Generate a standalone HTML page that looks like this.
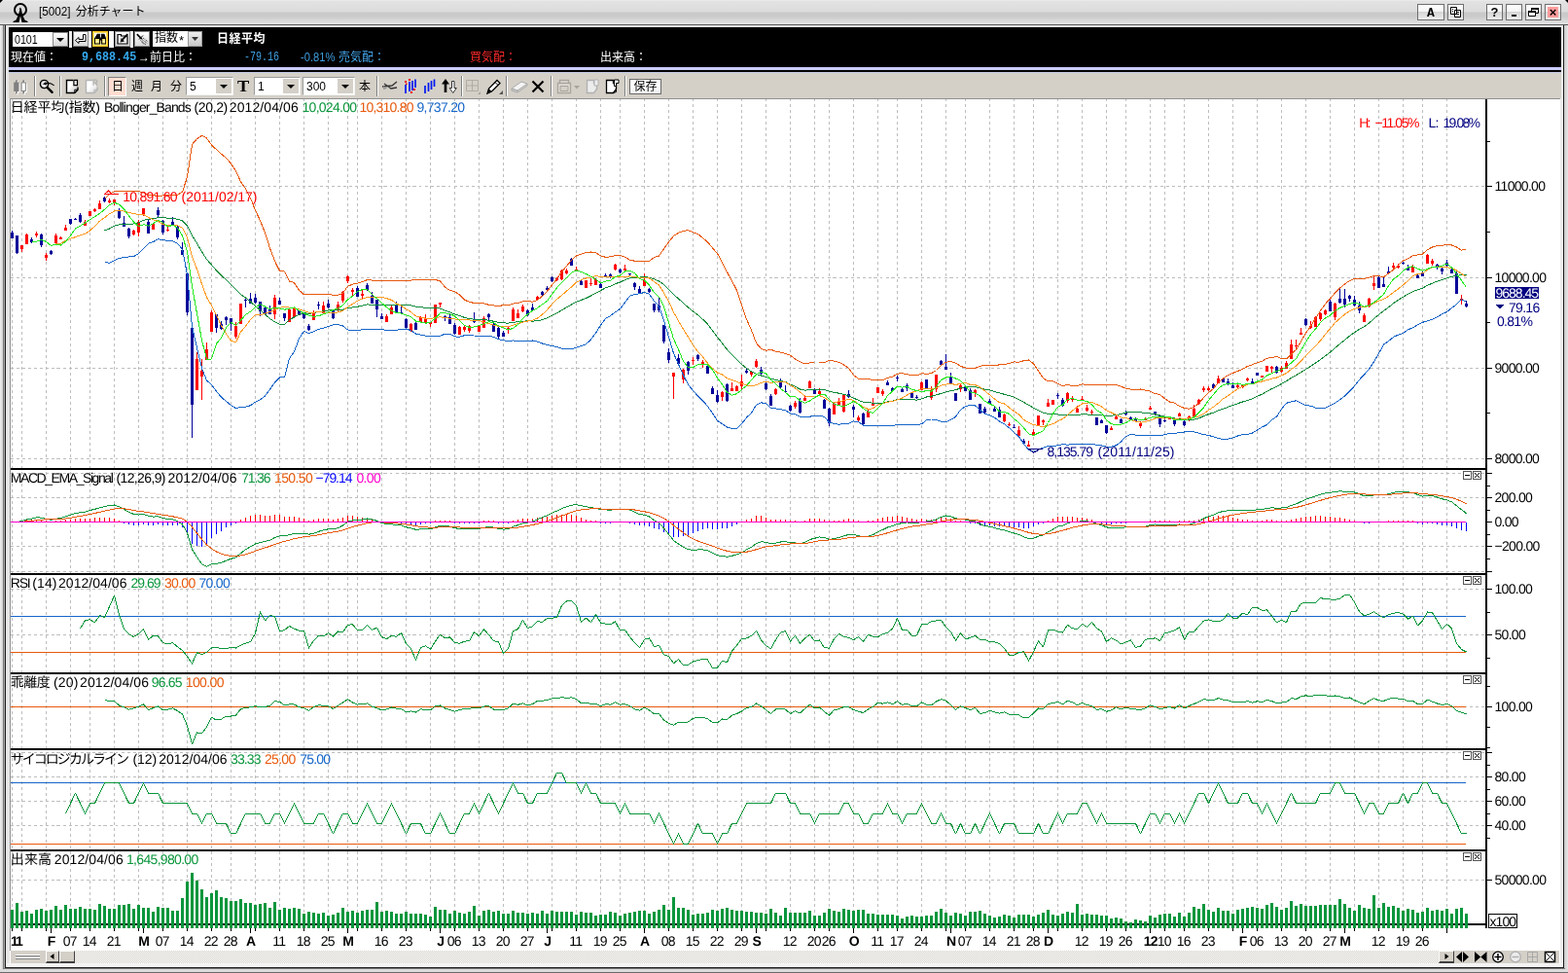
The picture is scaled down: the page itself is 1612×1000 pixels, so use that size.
<!DOCTYPE html>
<html lang="ja">
<head>
<meta charset="utf-8">
<title>[5002] 分析チャート</title>
<style>
*{box-sizing:border-box}
html,body{margin:0;padding:0}
body{width:1612px;height:1000px;overflow:hidden;position:relative;background:#d4d0c8;font-family:"Liberation Sans","Noto Sans CJK JP",sans-serif;font-size:12px;color:#000}
.abs{position:absolute}
#titlebar{left:0;top:0;width:1612px;height:25px;background:linear-gradient(#f0f0f0 0,#e2e2e2 1px,#dcdcdc 12px,#c9c9c9 13px,#cbcbcb 17px,#e0e0e0 24px)}
#titletext{left:39.500px;top:5px;font-size:11px;letter-spacing:0;white-space:pre;line-height:14px}
#titletext span{font-size:12px;letter-spacing:0}
.tbtn{top:4px;height:17px;border:1px solid #6e6e6e;background:linear-gradient(#fff 0,#f4f4f4 45%,#d6d6d6 50%,#ececec 100%);text-align:center;font-weight:bold;font-size:12px;line-height:15px}
#frame{left:0;top:25px;width:1612px;height:975px;background:#e4e4e4}
#blackbar{left:9px;top:28px;width:1596px;height:41px;background:#000}
.mono{font-family:"Liberation Mono",monospace;font-size:11px;letter-spacing:-0.6px;white-space:pre}
.jp{font-size:12px;letter-spacing:0}
.row2{top:52px;line-height:14px;color:#fff}
#toolbar{left:9px;top:75px;width:1596px;height:26px;background:#d4d0c8}
.tsep{top:78px;width:2px;height:21px;border-left:1px solid #808080;border-right:1px solid #fff}
.combo{top:79px;height:19px;background:#fff;border:1px solid #9a9a9a;border-right-color:#f4f4f4;border-bottom-color:#f4f4f4;font-size:12px;line-height:18px;padding-left:3px}
.combo i{position:absolute;right:1px;top:1px;width:16px;height:15px;background:#d4d0c8}
.combo i:after{content:"";position:absolute;left:4px;top:6px;border:4px solid transparent;border-top:4px solid #000;border-bottom:0}
.tt{top:81px;font-size:12px;line-height:16px;height:16px}
.ib{top:32px;width:16px;height:16px;background:linear-gradient(#fff,#d8d8d8);border:1px solid #888}
.wsep{top:32px;width:3px;height:17px;background:#f0f0f0}
</style>
</head>
<body>
<div id="root" style="position:absolute;left:0;top:0;width:1612px;height:1000px;will-change:transform">
<div id="titlebar" class="abs"></div>
<svg class="abs" style="left:0;top:0" width="1612" height="4"><path d="M0 0h3L0 3zM1612 0h-3l3 3z" fill="#000"/></svg>
<svg class="abs" style="left:13px;top:2px" width="16" height="22" viewBox="0 0 16 22"><circle cx="8" cy="8" r="6" fill="none" stroke="#000" stroke-width="2"/><path d="M8 5.5l-1.500 2h1L6 13l-2.500 5.500l-3 1.500v1h6l1.500-7l1.500 7h6v-1l-3-1.500L10 13l-1-5.500z" fill="#000"/></svg>
<div id="titletext" class="abs"><span style="display:inline-block;font-size:13px;transform:scaleX(.9);transform-origin:left;letter-spacing:0">[5002]</span><span style="margin-left:2px">分析チャート</span></div>
<div class="abs tbtn" style="left:1457px;width:28px;font-family:'Liberation Mono',monospace;line-height:17px;font-size:13px">A</div>
<div class="abs tbtn" style="left:1488px;width:17px"><svg width="11" height="11" viewBox="0 0 11 11" style="margin-top:2px"><path d="M.5.5h6v7h-6zM4.500 3.500h6v7h-6z" fill="#fff" stroke="#000"/><path d="M2 2.500h1M2 4.500h1M6 5.500h3M6 7.500h3" stroke="#000"/></svg></div>
<div class="abs tbtn" style="left:1528px;width:17px;font-size:13px">?</div>
<div class="abs tbtn" style="left:1548px;width:17px"><svg width="9" height="13"><path d="M2 10h5v2H2z" fill="#000"/></svg></div>
<div class="abs tbtn" style="left:1568px;width:17px"><svg width="11" height="11" viewBox="0 0 11 11" style="margin-top:2px"><path d="M3.500 1.500h7v5h-7z" fill="none" stroke="#000"/><path d="M3 1h8v2H3z" fill="#000"/><path d="M.5 4.500h7v5h-7z" fill="#fff" stroke="#000"/><path d="M0 4h8v2H0z" fill="#000"/></svg></div>
<div class="abs tbtn" style="left:1588px;width:17px"><div style="margin:2px;height:11px;background:#ff9c9c;line-height:11px;font-size:13px">×</div></div>

<div id="frame" class="abs"></div>
<div class="abs" style="left:0;top:25px;width:1612px;height:1px;background:#5a5a5a"></div>
<div class="abs" style="left:3px;top:26px;width:1px;height:970px;background:#7a7a7a"></div>
<div class="abs" style="left:4px;top:26px;width:1px;height:969px;background:#a8a8a8"></div>
<div class="abs" style="left:5px;top:26px;width:1px;height:969px;background:#1c1c1c"></div>
<div class="abs" style="left:6px;top:26px;width:4px;height:968px;background:#e6e6e6"></div>
<div class="abs" style="left:1604px;top:26px;width:3px;height:968px;background:#ececec"></div>
<div class="abs" style="left:1607px;top:26px;width:1px;height:969px;background:#1c1c1c"></div>
<div class="abs" style="left:1608px;top:26px;width:4px;height:974px;background:linear-gradient(90deg,#c8c8c8,#e8e8e8)"></div>
<div class="abs" style="left:0;top:26px;width:3px;height:974px;background:linear-gradient(90deg,#f0f0f0,#d0d0d0)"></div>

<div id="blackbar" class="abs"></div>
<div class="abs" style="left:9px;top:69px;width:1596px;height:3px;background:#ccccff"></div>
<div class="abs" style="left:9px;top:72px;width:1596px;height:2px;background:#000"></div>
<div class="abs" style="left:9px;top:74px;width:1596px;height:1px;background:#c4cce8"></div>

<!-- row 1 of black bar -->
<div class="abs" style="left:13px;top:33px;width:41px;height:15px;background:#fff;line-height:15px;padding-left:2px;font-size:13px;letter-spacing:0"><span style="display:inline-block;transform:scaleX(.82);transform-origin:left">0101</span></div>
<div class="abs ib" style="left:54px;top:33px;height:15px"><svg width="14" height="13"><path d="M3 5h8l-4 4z" fill="#000"/></svg></div>
<div class="abs wsep" style="left:71px"></div>
<div class="abs ib" style="left:75px"><svg width="14" height="14" viewBox="0 0 14 14"><path d="M9.500 2.500h2.500v7H5v2l-3.500-3L5 5.500v2h4.500z" fill="#fff" stroke="#000"/></svg></div>
<div class="abs wsep" style="left:91px"></div>
<div class="abs ib" style="left:95px;border-color:#ffc820;background:linear-gradient(#fff 50%,#fff0a8 50%);outline:1px solid #ffdc60;outline-offset:-2px"><svg width="14" height="14" viewBox="0 0 14 14"><path d="M4.200 2.200H6.600V12H1.400V7zM8.600 2.200H11L12.700 7v5H8.600z" fill="#ffe470" stroke="#000" stroke-width="1.100"/><path d="M4.200 2.200H6.600V7H2zM8.600 2.200H11L12.400 7H8.600zM6.600 5.500h2v3h-2z" fill="#000"/><path d="M3 8.500h2.200v2H3zM9.800 8.500H12v2H9.800z" fill="#fff6c0"/></svg></div>
<div class="abs wsep" style="left:112px;width:5px;background:#fff"></div>
<div class="abs ib" style="left:118px"><svg width="14" height="14" viewBox="0 0 14 14"><path d="M2 4V2.500H5.500V4H12V12H2z" fill="#f4f4f4" stroke="#000" stroke-width="1.200"/><path d="M12.300 2.200L7 7.500" stroke="#000" stroke-width="1.800"/><path d="M4.600 10.400L5.600 6 9 9.400z" fill="#000"/></svg></div>
<div class="abs wsep" style="left:134px"></div>
<div class="abs ib" style="left:138px"><svg width="14" height="14" viewBox="0 0 14 14"><path d="M1.800 2.200L6.800 7.200" stroke="#000" stroke-width="1.700"/><path d="M4 7.500l4-4" stroke="#000" stroke-width="1"/><path d="M5.500 8.500L11 12.800M7 7.500L12.300 11.500M8 6L13 9.800M6.500 9.800L9.500 13" stroke="#333" stroke-width=".9" stroke-dasharray="1.200 .7"/></svg></div>
<div class="abs" style="left:157px;top:32px;width:36px;height:16px;background:#fff;font-size:12px;line-height:15px;padding-left:2px;white-space:nowrap"><span style="position:absolute;left:2px;top:0">指数</span><span style="position:absolute;left:27px;top:2px;font-size:13px;line-height:15px">*</span></div>
<div class="abs" style="left:193px;top:32px;width:15px;height:16px;background:linear-gradient(#eee,#c8c8c8);border:1px solid #999"><svg width="13" height="14"><path d="M3 5h7l-3.500 4z" fill="#333"/></svg></div>
<div class="abs" style="left:223px;top:33px;font-weight:bold;font-size:12px;line-height:15px;letter-spacing:0.5px;color:#fff">日経平均</div>

<!-- row 2 -->
<div class="abs row2 jp" style="left:11px">現在値：</div>
<div class="abs row2 mono" style="left:84px;color:#35aaf0;font-weight:bold;font-size:13px;letter-spacing:0;transform:scaleX(.9);transform-origin:left">9,688.45</div>
<div class="abs row2 jp" style="left:142px">→前日比：</div>
<div class="abs row2 mono" style="left:251px;color:#3f9fe0;font-size:13px;letter-spacing:0;transform:scaleX(.77);transform-origin:left">-79.16</div>
<div class="abs row2" style="left:309px;color:#3f9fe0;font-size:13px;letter-spacing:0;transform:scaleX(.86);transform-origin:left">-0.81%</div>
<div class="abs row2 jp" style="left:348px;color:#45a8ee">売気配：</div>
<div class="abs row2 jp" style="left:483px;color:#ff2a2a">買気配：</div>
<div class="abs row2 jp" style="left:617px">出来高：</div>

<!-- toolbar -->
<div id="toolbar" class="abs"></div>
<svg class="abs" style="left:13px;top:80px" width="16" height="18" viewBox="0 0 16 18"><g fill="#fff"><path d="M2.200 5.400h5.300v9.600H2.200zM4 3.200h1.700v14H4zM9.600 5.400h5.300v9.600H9.600zM11.400 3.200h1.700v14h-1.700z"/></g><path d="M1.200 4.400h5.300v9.600H1.200zM3 2.200h1.700v14H3zM10.400 2.200h1.700v14h-1.700z" fill="#808080"/><path d="M9.100 4.900h4.300v8.600H9.100z" fill="#fff" stroke="#808080"/></svg>
<div class="abs tsep" style="left:35px"></div>
<svg class="abs" style="left:40px;top:79px" width="18" height="18" viewBox="0 0 18 18"><defs><radialGradient id="mg"><stop offset="0" stop-color="#fff"/><stop offset="1" stop-color="#d0d0d0"/></radialGradient></defs><circle cx="5.500" cy="7.500" r="4.100" fill="url(#mg)" stroke="#000" stroke-width="1.400"/><path d="M8.600 10.800l5 5" stroke="#000" stroke-width="2.400" stroke-linecap="round"/><path d="M15.600 8.800Q11.500 5.300 6.500 6.900" fill="none" stroke="#000" stroke-width="1.100"/><path d="M3.900 7.400l3.400-2.300.5 3.400z" fill="#000"/></svg>
<div class="abs tsep" style="left:61px"></div>
<svg class="abs" style="left:67px;top:81px" width="15" height="16" viewBox="0 0 15 16"><defs><linearGradient id="dga" x1="0" y1="0" x2="1" y2="1"><stop offset="0.400" stop-color="#fff"/><stop offset="1" stop-color="#b8b8b8"/></linearGradient></defs><path d="M8 1.500H1.500v13h8.300l3.200-3.300V8.500" fill="url(#dga)" stroke="#000" stroke-width="1.400"/><path d="M9.800 14.500v-3.300H13" fill="none" stroke="#000"/><path d="M8.900 1.400h3.600v5.200H8.900z" fill="#e8e8e8" stroke="#000" stroke-width="1.200"/></svg>
<svg class="abs" style="left:87px;top:81px" width="15" height="16" viewBox="0 0 15 16"><defs><linearGradient id="dgb" x1="0" y1="0" x2="1" y2="1"><stop offset="0.400" stop-color="#fff"/><stop offset="1" stop-color="#d8d8d8"/></linearGradient></defs><path d="M8 1.500H1.500v13h8.300l3.200-3.300V8.500" fill="url(#dgb)" stroke="#b4b4b4" stroke-width="1.400"/><path d="M9.800 14.500v-3.300H13" fill="none" stroke="#b4b4b4"/><path d="M9 7V1.200h2.200q1.600 0 1.600 1.500t-1.600 1.500H9m2.200 0L13 7" fill="none" stroke="#b0b0b0" stroke-width="1.200"/></svg>
<div class="abs tsep" style="left:107px"></div>
<div class="abs" style="left:111px;top:79px;width:19px;height:20px;background:#ffdcd0;border:1px solid #fff;border-top-color:#808080;border-left-color:#808080"></div>
<div class="abs tt" style="left:115px">日</div>
<div class="abs tt" style="left:135px">週</div>
<div class="abs tt" style="left:155px">月</div>
<div class="abs tt" style="left:175px">分</div>
<div class="abs combo" style="left:191px;width:49px">5<i></i></div>
<div class="abs" style="left:244px;top:79px;font-family:'Liberation Serif',serif;font-weight:bold;font-size:16px;line-height:19px;transform:scaleX(1.15);transform-origin:left">T</div>
<div class="abs combo" style="left:261px;width:48px">1<i></i></div>
<div class="abs combo" style="left:311px;width:54px">300<i></i></div>
<div class="abs tt" style="left:369px">本</div>
<div class="abs tsep" style="left:387px"></div>
<svg class="abs" style="left:392px;top:80px" width="18" height="18" viewBox="0 0 18 18"><path d="M1 9l10-1l5-4M3 6l7 5l6-1" fill="none" stroke="#333" stroke-width="1.300"/><path d="M2 8l4 3-4 1z" fill="#999"/></svg>
<svg class="abs" style="left:414px;top:80px" width="16" height="18" viewBox="0 0 16 18"><path d="M3 7v9M7 4v10M10 3v10M13 1.500v8.500" stroke="#0018f0" stroke-width="1.700"/><path d="M2 3h2v2H2zM6 1h2v2H6zM11 11h2v2h-2zM8 14h2v2H8zM3 5.500h1.500v1.500H3z" fill="#f00000"/></svg>
<svg class="abs" style="left:434px;top:80px" width="16" height="18" viewBox="0 0 16 18"><path d="M3 8v8M6.500 5v9M9.500 3v9M12.500 1.500v7.500" stroke="#0018f0" stroke-width="1.700"/></svg>
<svg class="abs" style="left:453px;top:80px" width="19" height="18" viewBox="0 0 19 18"><path d="M5 1l4 5.500H6.300v8.500H3.700V6.500H1z" fill="#000"/><path d="M11.500 3.500h2.500v7h2.300L12.750 15.500 9.200 10.500h2.300z" fill="#fff" stroke="#222" stroke-width=".9"/></svg>
<div class="abs tsep" style="left:474px"></div>
<svg class="abs" style="left:478px;top:81px" width="18" height="17" viewBox="0 0 18 17"><path d="M1.500 1.500h12v11h-12zM1.500 7h12M7.500 1.500v11" fill="none" stroke="#b0aca4"/><path d="M13 16h3v-3z" fill="#a8a49c"/></svg>
<svg class="abs" style="left:499px;top:80px" width="19" height="18" viewBox="0 0 19 18"><path d="M2 16l1.500-5L12 2.500l3 3L6.500 14z" fill="#fff" stroke="#000" stroke-width="1.300"/><path d="M2 16l1.500-5l3 3z" fill="#000"/><path d="M10 4.500l3 3" stroke="#000"/><path d="M14 17h4v-4z" fill="#555"/></svg>
<div class="abs tsep" style="left:520px"></div>
<svg class="abs" style="left:525px;top:82px" width="18" height="14" viewBox="0 0 18 14"><path d="M1 9l10-7l6 2l-10 7z" fill="#f4f4f4" stroke="#aaa"/><path d="M1 9v2l6 2v-2z" fill="#ccc" stroke="#aaa"/><path d="M7 13l10-7V4" fill="none" stroke="#aaa"/></svg>
<svg class="abs" style="left:545px;top:81px" width="16" height="16" viewBox="0 0 16 16"><path d="M2.500 2.500l11 11M13.500 2.500l-11 11" stroke="#000" stroke-width="2.200"/></svg>
<div class="abs tsep" style="left:566px"></div>
<svg class="abs" style="left:572px;top:81px" width="25" height="16" viewBox="0 0 25 16"><path d="M3.500 1.500h9v3h-9zM1.500 4.500h13v10h-13z" fill="#e0ddd6" stroke="#a8a49c" stroke-width="1.300"/><path d="M4 7.500h8v5H4z" fill="#d4d0c8" stroke="#a8a49c"/><path d="M18 7h6l-3 3.500z" fill="#a8a49c"/></svg>
<svg class="abs" style="left:602px;top:81px" width="15" height="16" viewBox="0 0 15 16"><path d="M1.500 1.500h7v3h3v6l-3 4h-7z" fill="#ececec" stroke="#b0b0b0" stroke-width="1.300"/><path d="M9 1h4v6H9z" fill="#eee" stroke="#b0b0b0"/></svg>
<svg class="abs" style="left:622px;top:81px" width="16" height="16" viewBox="0 0 16 16"><path d="M1.500 1.500h7v3h3v6l-3 4h-7z" fill="#fff" stroke="#000" stroke-width="1.300"/><path d="M9.500 1h4.500v3.500h-2.500v3h-2z" fill="#fff" stroke="#000"/><path d="M8.500 14.500l3-1v-3" fill="none" stroke="#000"/></svg>
<div class="abs tsep" style="left:642px"></div>
<div class="abs" style="left:647px;top:81px;width:33px;height:16px;background:linear-gradient(#fff 50%,#ececec);border:1px solid #6a6a6a;font-size:12px;line-height:14px;text-align:center;letter-spacing:0"><span>保存</span></div>

<svg width="1612" height="1000" viewBox="0 0 1612 1000" style="position:absolute;left:0;top:0;will-change:transform" font-family="Liberation Sans, Noto Sans CJK JP, sans-serif" shape-rendering="crispEdges" text-rendering="geometricPrecision">
<rect x="10" y="101" width="1594" height="892" fill="#fff" />
<path d="M12.500 101V950M22.500 101V950M47.500 101V950M72.500 101V950M92.500 101V950M117.500 101V950M142.500 101V950M167.500 101V950M192.500 101V950M217.500 101V950M237.500 101V950M262.500 101V950M287.500 101V950M312.500 101V950M337.500 101V950M357.500 101V950M367.500 101V950M392.500 101V950M417.500 101V950M442.500 101V950M467.500 101V950M492.500 101V950M517.500 101V950M542.500 101V950M567.500 101V950M592.500 101V950M617.500 101V950M637.500 101V950M662.500 101V950M687.500 101V950M712.500 101V950M737.500 101V950M762.500 101V950M787.500 101V950M812.500 101V950M837.500 101V950M852.500 101V950M877.500 101V950M902.500 101V950M922.500 101V950M947.500 101V950M972.500 101V950M992.500 101V950M1017.500 101V950M1042.500 101V950M1062.500 101V950M1087.500 101V950M1112.500 101V950M1137.500 101V950M1157.500 101V950M1182.500 101V950M1197.500 101V950M1217.500 101V950M1242.500 101V950M1267.500 101V950M1292.500 101V950M1317.500 101V950M1342.500 101V950M1367.500 101V950M1392.500 101V950M1417.500 101V950M1442.500 101V950M1462.500 101V950M1487.500 101V950" stroke="#bdbdbd" stroke-width="1" stroke-dasharray="3 3" fill="none"/>
<path d="M10.500 191.500H1527M10.500 285.500H1527M10.500 378.500H1527M10.500 471.500H1527M10.500 486.500H1527M10.500 511.500H1527M10.500 561.500H1527M10.500 587.500H1527M10.500 773.500H1527M10.500 605.500H1527M10.500 652.500H1527M10.500 726.500H1527M10.500 798.500H1527M10.500 823.500H1527M10.500 848.500H1527M10.500 904.500H1527" stroke="#bdbdbd" stroke-width="1" stroke-dasharray="3 3" fill="none"/>
<path d="M22.500 252.000V259.000M27.500 240.000V251.000M37.500 238.000V244.400M47.500 260.000V267.600M57.500 240.000V251.000M62.500 243.000V246.000M67.500 231.000V237.000M87.500 226.000V232.000M92.500 217.000V222.000M97.500 214.000V218.000M102.500 206.000V215.000M112.500 204.400V209.000M117.500 205.000V211.000M137.500 235.600V242.000M142.500 226.000V242.600M147.500 213.600V222.000M157.500 229.000V236.000M172.500 233.000V237.600M202.500 362.000V400.600M207.500 369.000V411.000M212.500 352.000V370.000M217.500 319.000V340.600M242.500 331.000V348.000M247.500 312.000V332.600M282.500 303.000V328.000M297.500 318.000V330.600M302.500 315.600V325.600M322.500 319.000V329.000M332.500 310.400V323.000M347.500 310.000V320.000M352.500 299.400V311.000M357.500 283.000V291.000M362.500 296.000V304.000M372.500 298.000V307.000M397.500 323.000V331.000M402.500 314.000V323.000M422.500 332.000V340.600M432.500 325.000V331.400M437.500 323.000V332.000M442.500 331.000V336.000M447.500 313.000V332.000M452.500 311.000V316.000M472.500 335.000V344.000M477.500 334.600V340.600M482.500 334.000V342.000M492.500 335.000V341.000M497.500 325.000V337.000M522.500 335.600V342.600M527.500 316.000V330.000M532.500 317.600V327.000M537.500 313.000V320.600M552.500 304.000V308.000M572.500 285.000V289.000M577.500 277.000V288.000M582.500 276.000V282.000M592.500 273.600V278.000M602.500 288.000V295.600M607.500 286.000V294.400M612.500 286.000V293.000M632.500 271.000V278.000M642.500 271.600V279.400M662.500 281.000V294.000M692.500 383.000V410.000M702.500 379.000V394.000M712.500 367.000V375.000M722.500 370.000V378.000M742.500 401.600V411.600M752.500 393.000V402.000M757.500 396.000V402.000M762.500 385.000V400.000M772.500 381.200V387.000M777.500 369.000V378.000M797.500 399.000V406.000M817.500 412.000V420.000M827.500 407.000V412.000M832.500 391.000V399.000M842.500 399.000V405.000M857.500 414.000V426.000M862.500 409.000V416.400M867.500 405.000V424.000M882.500 427.000V433.000M892.500 421.000V429.000M897.500 409.000V417.000M902.500 398.000V403.600M907.500 400.000V407.000M947.500 392.000V401.000M957.500 397.000V411.000M962.500 385.000V403.000M987.500 395.000V403.000M1002.500 400.000V408.000M1032.500 425.000V434.000M1037.500 434.000V438.000M1047.500 438.000V448.000M1057.500 453.000V459.000M1062.500 441.000V448.000M1067.500 427.000V438.000M1072.500 431.000V437.000M1077.500 410.000V418.000M1082.500 411.000V416.000M1097.500 403.000V413.600M1102.500 407.000V413.000M1107.500 417.000V424.000M1112.500 407.000V412.000M1117.500 416.000V423.000M1122.500 421.000V426.000M1142.500 438.000V442.000M1147.500 426.000V431.000M1172.500 433.000V440.000M1177.500 429.000V432.000M1182.500 416.600V421.000M1202.500 429.400V430.600M1212.500 424.000V428.000M1222.500 427.000V432.600M1227.500 416.000V428.000M1232.500 409.600V416.000M1237.500 397.000V403.000M1242.500 397.000V402.000M1252.500 386.000V394.000M1272.500 394.000V399.600M1277.500 394.600V399.000M1282.500 388.000V391.600M1297.500 385.600V387.600M1302.500 376.000V381.600M1307.500 376.000V383.000M1317.500 375.600V382.600M1322.500 370.600V379.000M1327.500 349.000V369.000M1332.500 349.000V358.000M1337.500 337.000V343.600M1347.500 330.400V337.600M1352.500 325.000V336.000M1357.500 321.000V329.600M1362.500 318.000V323.600M1372.500 311.000V328.600M1402.500 322.000V331.000M1407.500 306.000V315.600M1412.500 284.000V298.000M1432.500 270.000V277.000M1437.500 270.600V276.000M1452.500 272.000V280.000M1467.500 261.400V271.000M1472.500 266.000V272.600M1502.500 303.000V313.000" stroke="#ff0000" stroke-width="1" fill="none"/>
<path d="M21 252h3v4h-3zM26 240.500h3v10h-3zM36 239.500h3v2h-3zM46 261.500h3v3h-3zM56 242h3v8h-3zM61 244h3v1.500h-3zM66 233.500h3v3h-3zM86 228h3v3.500h-3zM91 217h3v4.500h-3zM96 215h3v2h-3zM101 209h3v5.500h-3zM111 205.500h3v2h-3zM116 205h3v3h-3zM136 236.500h3v4.500h-3zM141 228h3v10.500h-3zM146 214h3v7h-3zM156 230h3v5.500h-3zM171 236h3v1h-3zM201 369h3v31.500h-3zM206 381h3v5.500h-3zM211 359h3v11h-3zM216 320.500h3v20h-3zM241 335h3v11h-3zM246 312h3v20.500h-3zM281 306h3v17h-3zM296 318h3v12.500h-3zM301 315.500h3v10h-3zM321 322h3v6.500h-3zM331 314h3v8h-3zM346 313h3v6h-3zM351 299.500h3v9.500h-3zM356 284h3v5h-3zM361 297.500h3v2.500h-3zM371 301.500h3v2h-3zM396 324.500h3v6h-3zM401 316h3v6.500h-3zM421 332.500h3v7h-3zM431 325.500h3v5.500h-3zM436 328h3v2.500h-3zM441 331h3v2h-3zM446 313h3v18.500h-3zM451 311h3v1.500h-3zM471 336h3v7.500h-3zM476 335.500h3v3.500h-3zM481 335h3v5h-3zM491 335h3v5.500h-3zM496 327h3v9.500h-3zM521 337h3v2h-3zM526 318h3v11.500h-3zM531 321.500h3v5h-3zM536 315h3v4.500h-3zM551 304.500h3v3h-3zM571 285.500h3v2.500h-3zM576 277.500h3v9.500h-3zM581 277.500h3v3.500h-3zM591 277h3v1h-3zM601 288h3v7.500h-3zM606 291h3v1h-3zM611 287h3v5.500h-3zM631 271.500h3v5.500h-3zM641 275.500h3v2h-3zM661 288h3v5.500h-3zM691 383h3v4h-3zM701 380h3v9.500h-3zM711 370h3v1h-3zM721 372h3v1.500h-3zM741 403h3v4.500h-3zM751 399h3v2.500h-3zM756 397h3v4.500h-3zM761 392h3v5h-3zM771 382h3v2.500h-3zM776 371h3v6h-3zM796 400h3v5h-3zM816 414h3v3.500h-3zM826 408.500h3v3h-3zM831 391.500h3v7h-3zM841 401.500h3v3h-3zM856 415h3v10.500h-3zM861 413h3v2.500h-3zM866 405.500h3v17h-3zM881 428.500h3v3h-3zM891 422.500h3v6h-3zM896 414h3v2.500h-3zM901 398h3v5.500h-3zM906 402h3v3h-3zM946 392.500h3v8h-3zM956 400.500h3v8.500h-3zM961 385h3v14.500h-3zM986 396h3v3.500h-3zM1001 401h3v3h-3zM1031 425.500h3v7.500h-3zM1036 435.500h3v1.500h-3zM1046 442h3v5.500h-3zM1056 456.500h3v2.500h-3zM1061 443.500h3v3.500h-3zM1066 427h3v10h-3zM1071 431.500h3v2.500h-3zM1076 414h3v3.500h-3zM1081 411h3v4.500h-3zM1096 403.500h3v8.500h-3zM1101 409h3v2h-3zM1106 420h3v3.500h-3zM1111 409.500h3v1h-3zM1116 419h3v2.500h-3zM1121 422.500h3v1.500h-3zM1141 439.500h3v2h-3zM1146 427.500h3v3h-3zM1171 435h3v3h-3zM1176 429.500h3v2h-3zM1181 418.500h3v2h-3zM1201 429.500h3v1h-3zM1211 424.500h3v3h-3zM1221 428h3v4h-3zM1226 419.500h3v8.500h-3zM1231 411h3v4h-3zM1236 399h3v2h-3zM1241 399h3v2h-3zM1251 389h3v4.500h-3zM1271 396h3v2h-3zM1276 395.500h3v2.500h-3zM1281 389h3v1.500h-3zM1296 386h3v1.500h-3zM1301 376h3v5.500h-3zM1306 377h3v2h-3zM1316 377.500h3v4.500h-3zM1321 373h3v5.500h-3zM1326 354h3v14.500h-3zM1331 355h3v1h-3zM1336 341.500h3v2h-3zM1346 334.500h3v2.500h-3zM1351 325.500h3v10h-3zM1356 322h3v6h-3zM1361 318.500h3v4.500h-3zM1371 311.500h3v14h-3zM1401 324h3v6.500h-3zM1406 306.500h3v8.500h-3zM1411 291h3v2.500h-3zM1431 273h3v2h-3zM1436 272.500h3v2h-3zM1451 273.500h3v6h-3zM1466 261.500h3v9h-3zM1471 268h3v3h-3zM1501 307h3v2h-3z" fill="#ff0000"/>
<path d="M12.500 237.000V245.000M17.500 242.000V261.000M32.500 244.000V249.600M42.500 240.000V253.600M52.500 257.000V261.600M72.500 225.000V231.000M77.500 224.400V225.400M82.500 218.600V229.000M107.500 202.000V207.600M122.500 214.000V225.000M127.500 222.000V233.000M132.500 234.000V245.000M152.500 225.600V240.000M162.500 213.000V223.000M167.500 226.000V241.000M177.500 223.000V232.000M182.500 232.000V246.000M187.500 249.000V262.000M192.500 280.000V324.400M197.500 337.000V450.000M222.500 323.000V342.000M227.500 330.000V339.000M232.500 325.400V334.000M237.500 327.000V340.000M252.500 307.000V316.000M257.500 301.000V312.000M262.500 302.000V312.000M267.500 310.000V325.000M272.500 316.000V324.000M277.500 314.000V323.000M287.500 305.600V313.000M292.500 322.000V330.000M307.500 319.000V323.600M312.500 321.000V328.000M317.500 333.000V340.000M327.500 310.000V318.000M337.500 307.600V317.000M342.500 318.000V328.000M367.500 294.000V305.000M377.500 291.000V299.000M382.500 300.000V312.000M387.500 308.000V326.000M392.500 322.000V328.000M407.500 310.000V321.000M412.500 315.000V322.000M417.500 327.400V337.000M427.500 331.000V339.000M457.500 324.000V330.000M462.500 321.600V333.000M467.500 332.000V343.600M487.500 321.000V332.000M502.500 321.600V329.000M507.500 332.000V341.000M512.500 336.000V348.000M517.500 340.000V346.000M542.500 318.000V325.000M547.500 312.400V319.400M557.500 299.000V304.000M562.500 294.000V299.000M567.500 283.600V290.000M587.500 265.000V273.000M597.500 288.000V293.000M617.500 290.000V296.000M622.500 281.000V285.000M627.500 281.200V285.600M637.500 275.600V280.600M647.500 280.600V284.400M652.500 290.000V297.600M657.500 293.600V301.600M667.500 296.000V301.000M672.500 312.000V321.000M677.500 306.000V321.000M682.500 334.000V353.000M687.500 358.000V373.000M697.500 364.000V375.000M707.500 371.000V385.000M717.500 364.000V371.000M727.500 374.000V384.000M732.500 397.000V405.000M737.500 401.000V414.000M747.500 394.000V412.600M767.500 379.000V384.000M782.500 377.000V386.000M787.500 393.000V401.000M792.500 405.000V417.000M802.500 389.000V399.000M807.500 396.000V403.000M812.500 416.000V422.600M822.500 409.000V425.000M837.500 399.000V405.000M847.500 410.000V420.000M852.500 419.000V438.000M872.500 400.600V409.000M877.500 416.000V429.000M887.500 424.000V437.000M912.500 391.000V396.000M917.500 398.000V402.000M922.500 385.600V391.600M927.500 398.000V403.000M932.500 394.000V402.000M937.500 403.000V409.000M942.500 406.000V410.000M952.500 390.000V400.000M967.500 369.600V376.000M972.500 364.000V380.000M977.500 383.000V394.000M982.500 404.000V412.000M992.500 397.000V402.000M997.500 399.000V411.000M1007.500 415.000V425.000M1012.500 418.000V426.000M1017.500 409.600V415.600M1022.500 418.000V423.000M1027.500 418.000V429.400M1042.500 436.000V440.000M1052.500 451.000V457.000M1087.500 404.000V409.600M1092.500 409.000V418.000M1127.500 429.000V437.000M1132.500 431.000V435.000M1137.500 437.000V446.000M1152.500 430.000V435.000M1157.500 422.000V427.000M1162.500 428.000V432.000M1167.500 429.000V433.000M1187.500 423.000V427.000M1192.500 426.000V439.000M1197.500 429.000V433.600M1207.500 431.000V438.000M1217.500 432.000V438.000M1247.500 394.000V399.000M1257.500 388.000V393.000M1262.500 389.400V395.600M1267.500 393.000V399.000M1287.500 389.000V394.000M1292.500 383.000V385.600M1312.500 376.000V384.000M1342.500 326.600V335.000M1367.500 308.000V320.000M1377.500 297.000V312.000M1382.500 297.000V316.000M1387.500 302.600V310.000M1392.500 304.000V315.000M1397.500 310.000V322.000M1417.500 284.000V296.000M1422.500 285.000V295.000M1427.500 274.000V282.000M1442.500 268.000V272.000M1447.500 272.000V278.000M1457.500 281.000V286.000M1462.500 279.000V284.000M1477.500 271.000V277.000M1482.500 274.000V282.000M1487.500 267.000V274.000M1492.500 276.000V281.000M1497.500 279.000V302.000M1507.500 309.000V316.000" stroke="#000099" stroke-width="1" fill="none"/>
<path d="M11 239h3v5.500h-3zM16 242h3v18h-3zM31 245.500h3v3h-3zM41 241h3v11h-3zM51 258h3v3h-3zM71 225h3v5h-3zM76 224.500h3v1h-3zM81 221h3v7h-3zM106 203h3v4h-3zM121 217h3v7h-3zM126 229h3v3.500h-3zM131 235h3v7.500h-3zM151 228h3v11.500h-3zM161 216h3v5h-3zM166 227h3v11.500h-3zM176 227.500h3v3.500h-3zM181 233h3v11h-3zM186 257h3v4.500h-3zM191 281h3v40h-3zM196 337h3v78.500h-3zM221 323h3v14h-3zM226 333h3v5h-3zM231 325.500h3v3h-3zM236 327h3v6h-3zM251 307.500h3v1.500h-3zM256 307h3v5h-3zM261 305.500h3v5.500h-3zM266 310h3v10h-3zM271 316h3v7h-3zM276 318h3v4.500h-3zM286 309h3v3.500h-3zM291 322h3v5h-3zM306 319h3v4.500h-3zM311 322h3v4.500h-3zM316 334.500h3v4h-3zM326 313h3v1h-3zM336 311.500h3v4.500h-3zM341 319h3v8h-3zM366 296h3v9h-3zM376 293h3v4.500h-3zM381 304h3v7.500h-3zM386 308h3v10h-3zM391 324.500h3v3h-3zM406 313h3v8h-3zM411 321h3v1h-3zM416 327.500h3v9h-3zM426 331.500h3v7h-3zM456 324.500h3v1h-3zM461 325.500h3v7h-3zM466 334h3v8.500h-3zM486 328h3v3h-3zM501 323h3v2.500h-3zM506 333h3v7.500h-3zM511 336.500h3v9.500h-3zM516 341.500h3v4h-3zM541 319h3v4.500h-3zM546 316h3v2.500h-3zM556 299.500h3v3h-3zM561 295.500h3v2.500h-3zM566 285h3v3.500h-3zM586 265.500h3v7h-3zM596 289h3v3.500h-3zM616 291.500h3v4h-3zM621 283h3v1h-3zM626 282h3v1.500h-3zM636 276.500h3v3.500h-3zM646 280.500h3v1h-3zM651 291h3v4h-3zM656 297h3v4h-3zM666 297h3v3h-3zM671 312h3v7h-3zM676 313.500h3v5h-3zM681 334h3v17h-3zM686 361.500h3v8h-3zM696 368h3v6h-3zM706 372h3v9h-3zM716 365h3v3.500h-3zM726 375.500h3v8h-3zM731 398.500h3v6h-3zM736 406h3v7h-3zM746 395h3v16.500h-3zM766 381h3v1.500h-3zM781 380h3v3.500h-3zM786 394h3v5.500h-3zM791 406.500h3v10h-3zM801 392h3v6h-3zM806 401.500h3v1h-3zM811 417h3v5h-3zM821 412h3v12h-3zM836 400h3v4.500h-3zM846 411h3v8.500h-3zM851 420h3v15h-3zM871 404.500h3v3.500h-3zM876 417.500h3v3h-3zM886 425h3v11h-3zM911 392.500h3v3h-3zM916 398.500h3v3h-3zM921 388h3v1h-3zM926 399.500h3v3h-3zM931 396h3v3h-3zM936 403.500h3v5h-3zM941 408h3v1h-3zM951 390h3v10h-3zM966 371h3v3.500h-3zM971 377h3v2.500h-3zM976 388h3v6h-3zM981 404h3v7.500h-3zM991 398h3v3.500h-3zM996 401h3v9.500h-3zM1006 415h3v9.500h-3zM1011 420h3v4h-3zM1016 411.500h3v3h-3zM1021 419.500h3v3h-3zM1026 421h3v8h-3zM1041 438.500h3v1h-3zM1051 452.500h3v3.500h-3zM1086 405.500h3v1.500h-3zM1091 411h3v6h-3zM1126 429h3v7.500h-3zM1131 432h3v2.500h-3zM1136 437h3v8h-3zM1151 431h3v3.500h-3zM1156 423.500h3v2.500h-3zM1161 429h3v1.500h-3zM1166 430.500h3v2h-3zM1186 423h3v2.500h-3zM1191 427h3v8.500h-3zM1196 431.500h3v1h-3zM1206 432h3v4h-3zM1216 433h3v4h-3zM1246 395h3v3.500h-3zM1256 388.500h3v4h-3zM1261 392h3v1.500h-3zM1266 396h3v2.500h-3zM1286 391.500h3v2h-3zM1291 383h3v2.500h-3zM1311 377h3v6h-3zM1341 327.500h3v6.500h-3zM1366 310h3v9.500h-3zM1376 306.500h3v4h-3zM1381 306.500h3v6.500h-3zM1386 304h3v2.500h-3zM1391 307.500h3v6h-3zM1396 313.500h3v5h-3zM1416 284.500h3v11h-3zM1421 292h3v2.500h-3zM1426 279h3v2h-3zM1441 270h3v1h-3zM1446 275h3v2.500h-3zM1456 283h3v2.500h-3zM1461 281h3v2.500h-3zM1476 272h3v2h-3zM1481 276h3v3h-3zM1486 270h3v3h-3zM1491 277h3v3.500h-3zM1496 280.500h3v21h-3zM1506 312h3v3h-3z" fill="#000099"/>
<polyline points="107.500,204.200 112.500,199.700 117.500,196.600 122.500,196.300 127.500,196.100 132.500,196.400 137.500,196.400 142.500,196.700 147.500,197.500 152.500,200.300 157.500,200.800 162.500,201.300 167.500,201.000 172.500,200.900 177.500,201.000 182.500,200.300 187.500,197.300 192.500,181.900 197.500,148.300 202.500,142.700 207.500,139.300 212.500,142.000 217.500,149.000 222.500,153.700 227.500,158.200 232.500,162.400 237.500,168.100 242.500,175.800 247.500,186.800 252.500,193.900 257.500,203.600 262.500,216.200 267.500,226.700 272.500,239.200 277.500,255.200 282.500,268.300 287.500,278.600 292.500,279.100 297.500,289.000 302.500,290.600 307.500,298.300 312.500,302.800 317.500,302.300 322.500,302.700 327.500,302.700 332.500,302.200 337.500,302.400 342.500,303.200 347.500,303.400 352.500,301.200 357.500,294.300 362.500,292.200 367.500,291.100 372.500,289.600 377.500,287.600 382.500,288.100 387.500,288.300 392.500,288.300 397.500,288.200 402.500,288.200 407.500,288.300 412.500,288.400 417.500,288.700 422.500,288.100 427.500,287.200 432.500,287.400 437.500,287.500 442.500,287.400 447.500,287.400 452.500,288.900 457.500,295.200 462.500,298.400 467.500,299.700 472.500,302.900 477.500,308.200 482.500,310.300 487.500,311.500 492.500,311.600 497.500,311.900 502.500,313.300 507.500,314.000 512.500,314.300 517.500,313.800 522.500,313.900 527.500,312.100 532.500,311.600 537.500,309.800 542.500,309.200 547.500,310.300 552.500,308.500 557.500,304.300 562.500,299.300 567.500,292.900 572.500,286.700 577.500,279.500 582.500,273.500 587.500,267.200 592.500,262.900 597.500,261.200 602.500,259.300 607.500,259.000 612.500,259.900 617.500,262.800 622.500,264.300 627.500,263.900 632.500,262.700 637.500,262.600 642.500,264.300 647.500,267.200 652.500,268.200 657.500,268.400 662.500,268.900 667.500,268.200 672.500,264.400 677.500,263.000 682.500,255.700 687.500,248.800 692.500,242.500 697.500,239.300 702.500,237.400 707.500,236.700 712.500,238.700 717.500,240.500 722.500,244.500 727.500,248.800 732.500,254.900 737.500,260.500 742.500,270.000 747.500,279.600 752.500,288.800 757.500,298.300 762.500,313.500 767.500,328.100 772.500,339.300 777.500,352.700 782.500,358.300 787.500,360.300 792.500,359.300 797.500,361.100 802.500,362.200 807.500,363.300 812.500,365.200 817.500,369.000 822.500,371.800 827.500,373.900 832.500,372.900 837.500,373.000 842.500,373.000 847.500,372.500 852.500,370.500 857.500,371.100 862.500,372.300 867.500,375.000 872.500,378.300 877.500,385.400 882.500,389.300 887.500,389.300 892.500,389.300 897.500,390.800 902.500,390.800 907.500,390.800 912.500,388.400 917.500,387.300 922.500,384.200 927.500,383.700 932.500,384.900 937.500,385.300 942.500,386.000 947.500,383.700 952.500,384.300 957.500,383.600 962.500,380.500 967.500,375.500 972.500,372.200 977.500,371.700 982.500,373.100 987.500,376.300 992.500,378.000 997.500,378.400 1002.500,378.500 1007.500,376.300 1012.500,375.300 1017.500,375.200 1022.500,375.800 1027.500,374.800 1032.500,374.700 1037.500,373.400 1042.500,371.900 1047.500,372.300 1052.500,370.700 1057.500,370.000 1062.500,373.800 1067.500,381.200 1072.500,388.600 1077.500,392.000 1082.500,391.900 1087.500,394.100 1092.500,396.600 1097.500,395.300 1102.500,396.900 1107.500,396.500 1112.500,394.900 1117.500,395.400 1122.500,395.400 1127.500,395.400 1132.500,395.700 1137.500,395.400 1142.500,395.400 1147.500,395.400 1152.500,397.100 1157.500,399.300 1162.500,400.100 1167.500,400.100 1172.500,400.000 1177.500,401.100 1182.500,402.100 1187.500,404.600 1192.500,405.500 1197.500,409.700 1202.500,413.000 1207.500,414.100 1212.500,417.500 1217.500,419.400 1222.500,420.200 1227.500,418.400 1232.500,414.600 1237.500,408.700 1242.500,403.700 1247.500,399.400 1252.500,393.300 1257.500,389.000 1262.500,385.500 1267.500,383.400 1272.500,381.400 1277.500,379.400 1282.500,376.500 1287.500,374.700 1292.500,372.800 1297.500,371.300 1302.500,368.300 1307.500,367.300 1312.500,366.600 1317.500,368.400 1322.500,369.000 1327.500,363.900 1332.500,359.400 1337.500,351.000 1342.500,342.300 1347.500,335.300 1352.500,327.100 1357.500,319.400 1362.500,312.300 1367.500,307.000 1372.500,300.900 1377.500,296.000 1382.500,292.000 1387.500,288.500 1392.500,286.500 1397.500,286.200 1402.500,286.300 1407.500,285.100 1412.500,283.400 1417.500,283.600 1422.500,284.900 1427.500,281.100 1432.500,277.100 1437.500,272.500 1442.500,267.900 1447.500,265.800 1452.500,262.800 1457.500,262.000 1462.500,261.000 1467.500,256.700 1472.500,254.000 1477.500,252.600 1482.500,252.300 1487.500,251.200 1492.500,252.000 1497.500,254.000 1502.500,257.200 1507.500,255.800" fill="none" stroke="#e8590c" stroke-width="1" stroke-linejoin="round"/>
<polyline points="107.500,269.700 112.500,270.200 117.500,267.800 122.500,265.400 127.500,264.700 132.500,263.900 137.500,263.600 142.500,260.800 147.500,255.300 152.500,250.300 157.500,248.600 162.500,245.800 167.500,246.600 172.500,247.400 177.500,247.800 182.500,250.100 187.500,256.400 192.500,282.200 197.500,335.900 202.500,357.500 207.500,378.300 212.500,391.000 217.500,395.500 222.500,402.100 227.500,408.200 232.500,412.500 237.500,416.600 242.500,419.600 247.500,418.300 252.500,418.200 257.500,416.700 262.500,413.100 267.500,410.700 272.500,406.900 277.500,400.100 282.500,393.200 287.500,387.900 292.500,388.000 297.500,368.400 302.500,361.400 307.500,348.000 312.500,340.300 317.500,342.600 322.500,340.700 327.500,338.200 332.500,337.300 337.500,335.400 342.500,333.700 347.500,333.700 352.500,334.900 357.500,339.000 362.500,339.800 367.500,339.400 372.500,338.800 377.500,338.200 382.500,338.300 387.500,338.600 392.500,338.700 397.500,339.400 402.500,339.500 407.500,339.200 412.500,338.500 417.500,338.000 422.500,339.700 427.500,343.100 432.500,344.100 437.500,345.200 442.500,345.700 447.500,345.700 452.500,345.300 457.500,343.200 462.500,343.400 467.500,345.900 472.500,346.200 477.500,344.700 482.500,344.900 487.500,345.000 492.500,345.600 497.500,345.600 502.500,345.200 507.500,346.400 512.500,348.500 517.500,349.900 522.500,350.300 527.500,350.000 532.500,350.100 537.500,350.600 542.500,350.500 547.500,350.000 552.500,351.100 557.500,353.000 562.500,354.600 567.500,355.500 572.500,356.700 577.500,358.100 582.500,358.300 587.500,358.800 592.500,357.300 597.500,355.500 602.500,353.700 607.500,349.000 612.500,342.200 617.500,334.300 622.500,327.500 627.500,324.500 632.500,320.800 637.500,317.400 642.500,310.900 647.500,304.200 652.500,302.300 657.500,301.900 662.500,300.400 667.500,302.200 672.500,309.400 677.500,314.900 682.500,329.500 687.500,346.200 692.500,363.100 697.500,374.400 702.500,385.500 707.500,395.200 712.500,401.500 717.500,407.000 722.500,411.800 727.500,417.500 732.500,424.700 737.500,432.400 742.500,435.600 747.500,439.100 752.500,440.300 757.500,440.400 762.500,435.500 767.500,429.200 772.500,424.300 777.500,416.100 782.500,413.800 787.500,414.800 792.500,419.200 797.500,420.000 802.500,420.600 807.500,421.700 812.500,425.000 817.500,425.800 822.500,428.100 827.500,428.500 832.500,428.200 837.500,427.200 842.500,427.100 847.500,428.400 852.500,434.000 857.500,435.300 862.500,436.200 867.500,435.700 872.500,435.100 877.500,432.900 882.500,433.500 887.500,437.100 892.500,437.700 897.500,437.600 902.500,437.600 907.500,437.600 912.500,437.400 917.500,437.200 922.500,436.800 927.500,436.700 932.500,436.200 937.500,436.300 942.500,436.300 947.500,435.900 952.500,431.800 957.500,431.000 962.500,431.400 967.500,433.200 972.500,433.700 977.500,431.500 982.500,428.400 987.500,421.200 992.500,417.400 997.500,416.700 1002.500,416.900 1007.500,421.300 1012.500,425.200 1017.500,426.600 1022.500,429.300 1027.500,433.000 1032.500,435.800 1037.500,439.800 1042.500,444.400 1047.500,448.900 1052.500,456.100 1057.500,462.400 1062.500,464.400 1067.500,462.300 1072.500,460.100 1077.500,458.700 1082.500,458.700 1087.500,457.600 1092.500,456.700 1097.500,457.200 1102.500,456.500 1107.500,456.400 1112.500,456.600 1117.500,456.500 1122.500,456.500 1127.500,457.200 1132.500,457.900 1137.500,459.200 1142.500,459.200 1147.500,457.700 1152.500,453.900 1157.500,448.600 1162.500,446.500 1167.500,447.100 1172.500,447.500 1177.500,448.000 1182.500,447.700 1187.500,447.100 1192.500,448.000 1197.500,446.700 1202.500,445.500 1207.500,446.000 1212.500,444.000 1217.500,444.000 1222.500,443.700 1227.500,443.800 1232.500,445.200 1237.500,446.600 1242.500,447.400 1247.500,448.900 1252.500,450.500 1257.500,451.400 1262.500,451.200 1267.500,449.900 1272.500,448.000 1277.500,446.500 1282.500,446.500 1287.500,445.100 1292.500,442.100 1297.500,438.900 1302.500,436.600 1307.500,431.600 1312.500,428.200 1317.500,420.400 1322.500,414.300 1327.500,412.800 1332.500,411.800 1337.500,414.400 1342.500,416.700 1347.500,417.200 1352.500,419.100 1357.500,419.700 1362.500,419.300 1367.500,416.700 1372.500,414.300 1377.500,410.800 1382.500,407.100 1387.500,401.900 1392.500,396.800 1397.500,390.300 1402.500,385.000 1407.500,379.200 1412.500,371.700 1417.500,363.300 1422.500,354.100 1427.500,350.600 1432.500,346.400 1437.500,344.100 1442.500,342.400 1447.500,338.900 1452.500,336.700 1457.500,333.800 1462.500,331.300 1467.500,329.800 1472.500,328.200 1477.500,325.900 1482.500,322.800 1487.500,320.500 1492.500,316.500 1497.500,312.700 1502.500,307.800 1507.500,310.100" fill="none" stroke="#1565c8" stroke-width="1" stroke-linejoin="round"/>
<polyline points="107.500,236.900 112.500,235.000 117.500,232.200 122.500,230.800 127.500,230.400 132.500,230.100 137.500,230.000 142.500,228.800 147.500,226.400 152.500,225.300 157.500,224.700 162.500,223.600 167.500,223.800 172.500,224.100 177.500,224.400 182.500,225.200 187.500,226.900 192.500,232.100 197.500,242.100 202.500,250.100 207.500,258.800 212.500,266.500 217.500,272.200 222.500,277.900 227.500,283.200 232.500,287.500 237.500,292.300 242.500,297.700 247.500,302.600 252.500,306.000 257.500,310.100 262.500,314.600 267.500,318.700 272.500,323.100 277.500,327.600 282.500,330.700 287.500,333.300 292.500,333.600 297.500,328.700 302.500,326.000 307.500,323.200 312.500,321.500 317.500,322.400 322.500,321.700 327.500,320.500 332.500,319.700 337.500,318.900 342.500,318.500 347.500,318.500 352.500,318.100 357.500,316.700 362.500,316.000 367.500,315.200 372.500,314.200 377.500,312.900 382.500,313.200 387.500,313.500 392.500,313.500 397.500,313.800 402.500,313.800 407.500,313.700 412.500,313.500 417.500,313.400 422.500,313.900 427.500,315.100 432.500,315.700 437.500,316.300 442.500,316.500 447.500,316.500 452.500,317.100 457.500,319.200 462.500,320.900 467.500,322.800 472.500,324.500 477.500,326.400 482.500,327.600 487.500,328.200 492.500,328.600 497.500,328.700 502.500,329.200 507.500,330.200 512.500,331.400 517.500,331.900 522.500,332.100 527.500,331.100 532.500,330.900 537.500,330.200 542.500,329.800 547.500,330.100 552.500,329.800 557.500,328.700 562.500,326.900 567.500,324.200 572.500,321.700 577.500,318.800 582.500,315.900 587.500,313.000 592.500,310.100 597.500,308.400 602.500,306.500 607.500,304.000 612.500,301.100 617.500,298.600 622.500,295.900 627.500,294.200 632.500,291.700 637.500,290.000 642.500,287.600 647.500,285.700 652.500,285.200 657.500,285.100 662.500,284.600 667.500,285.200 672.500,286.900 677.500,288.900 682.500,292.600 687.500,297.500 692.500,302.800 697.500,306.900 702.500,311.500 707.500,316.000 712.500,320.100 717.500,323.800 722.500,328.200 727.500,333.100 732.500,339.800 737.500,346.400 742.500,352.800 747.500,359.300 752.500,364.500 757.500,369.300 762.500,374.500 767.500,378.600 772.500,381.800 777.500,384.400 782.500,386.000 787.500,387.500 792.500,389.200 797.500,390.500 802.500,391.400 807.500,392.500 812.500,395.100 817.500,397.400 822.500,400.000 827.500,401.200 832.500,400.600 837.500,400.100 842.500,400.100 847.500,400.500 852.500,402.300 857.500,403.200 862.500,404.200 867.500,405.400 872.500,406.700 877.500,409.100 882.500,411.400 887.500,413.200 892.500,413.500 897.500,414.200 902.500,414.200 907.500,414.200 912.500,412.900 917.500,412.200 922.500,410.500 927.500,410.200 932.500,410.600 937.500,410.800 942.500,411.100 947.500,409.800 952.500,408.000 957.500,407.300 962.500,405.900 967.500,404.400 972.500,402.900 977.500,401.600 982.500,400.800 987.500,398.800 992.500,397.700 997.500,397.500 1002.500,397.700 1007.500,398.800 1012.500,400.300 1017.500,400.900 1022.500,402.600 1027.500,403.900 1032.500,405.300 1037.500,406.600 1042.500,408.100 1047.500,410.600 1052.500,413.400 1057.500,416.200 1062.500,419.100 1067.500,421.800 1072.500,424.400 1077.500,425.400 1082.500,425.300 1087.500,425.900 1092.500,426.600 1097.500,426.300 1102.500,426.700 1107.500,426.500 1112.500,425.700 1117.500,426.000 1122.500,426.000 1127.500,426.300 1132.500,426.800 1137.500,427.300 1142.500,427.300 1147.500,426.500 1152.500,425.500 1157.500,424.000 1162.500,423.300 1167.500,423.600 1172.500,423.800 1177.500,424.500 1182.500,424.900 1187.500,425.800 1192.500,426.800 1197.500,428.200 1202.500,429.200 1207.500,430.000 1212.500,430.800 1217.500,431.700 1222.500,432.000 1227.500,431.100 1232.500,429.900 1237.500,427.600 1242.500,425.600 1247.500,424.100 1252.500,421.900 1257.500,420.200 1262.500,418.300 1267.500,416.600 1272.500,414.700 1277.500,413.000 1282.500,411.500 1287.500,409.900 1292.500,407.400 1297.500,405.100 1302.500,402.400 1307.500,399.500 1312.500,397.400 1317.500,394.400 1322.500,391.700 1327.500,388.400 1332.500,385.600 1337.500,382.700 1342.500,379.500 1347.500,376.300 1352.500,373.100 1357.500,369.600 1362.500,365.800 1367.500,361.900 1372.500,357.600 1377.500,353.400 1382.500,349.600 1387.500,345.200 1392.500,341.600 1397.500,338.300 1402.500,335.700 1407.500,332.100 1412.500,327.500 1417.500,323.400 1422.500,319.500 1427.500,315.900 1432.500,311.800 1437.500,308.300 1442.500,305.200 1447.500,302.300 1452.500,299.700 1457.500,297.900 1462.500,296.200 1467.500,293.300 1472.500,291.100 1477.500,289.200 1482.500,287.500 1487.500,285.900 1492.500,284.200 1497.500,283.400 1502.500,282.500 1507.500,282.900" fill="none" stroke="#0c8a3a" stroke-width="1" stroke-linejoin="round"/>
<polyline points="57.500,250.200 62.500,250.100 67.500,247.500 72.500,245.300 77.500,243.700 82.500,241.700 87.500,240.500 92.500,237.000 97.500,232.400 102.500,227.200 107.500,223.700 112.500,219.800 117.500,217.000 122.500,216.400 127.500,217.100 132.500,218.500 137.500,219.400 142.500,220.500 147.500,220.400 152.500,223.500 157.500,225.800 162.500,227.300 167.500,230.600 172.500,231.800 177.500,231.700 182.500,231.900 187.500,234.400 192.500,243.700 197.500,263.800 202.500,276.800 207.500,291.900 212.500,305.700 217.500,313.900 222.500,324.000 227.500,334.700 232.500,343.100 237.500,350.300 242.500,351.700 247.500,341.300 252.500,335.300 257.500,328.400 262.500,323.600 267.500,323.600 272.500,322.200 277.500,320.600 282.500,318.400 287.500,316.300 292.500,315.500 297.500,316.100 302.500,316.800 307.500,317.900 312.500,319.500 317.500,321.300 322.500,321.200 327.500,320.300 332.500,321.100 337.500,321.500 342.500,321.500 347.500,321.000 352.500,319.300 357.500,315.400 362.500,312.500 367.500,309.200 372.500,307.100 377.500,305.500 382.500,305.300 387.500,305.500 392.500,305.500 397.500,306.700 402.500,308.300 407.500,312.000 412.500,314.400 417.500,317.600 422.500,320.700 427.500,324.800 432.500,326.200 437.500,327.200 442.500,327.500 447.500,326.400 452.500,325.900 457.500,326.300 462.500,327.400 467.500,328.000 472.500,328.400 477.500,328.100 482.500,329.000 487.500,329.300 492.500,329.700 497.500,331.100 502.500,332.600 507.500,334.100 512.500,335.400 517.500,335.700 522.500,335.800 527.500,334.100 532.500,332.700 537.500,331.100 542.500,330.000 547.500,329.100 552.500,327.000 557.500,323.200 562.500,318.400 567.500,312.700 572.500,307.600 577.500,303.500 582.500,299.100 587.500,294.900 592.500,290.200 597.500,287.600 602.500,286.000 607.500,284.800 612.500,283.700 617.500,284.400 622.500,284.200 627.500,284.900 632.500,284.300 637.500,285.000 642.500,284.900 647.500,283.800 652.500,284.500 657.500,285.500 662.500,285.600 667.500,286.000 672.500,289.500 677.500,293.000 682.500,301.000 687.500,309.900 692.500,320.700 697.500,329.900 702.500,338.400 707.500,346.400 712.500,354.600 717.500,361.500 722.500,366.800 727.500,373.300 732.500,378.600 737.500,383.000 742.500,385.000 747.500,388.700 752.500,390.600 757.500,392.200 762.500,394.400 767.500,395.800 772.500,396.800 777.500,395.600 782.500,393.500 787.500,392.100 792.500,393.500 797.500,392.300 802.500,392.200 807.500,392.800 812.500,395.800 817.500,398.900 822.500,403.100 827.500,406.900 832.500,407.600 837.500,408.100 842.500,406.600 847.500,408.600 852.500,412.300 857.500,413.600 862.500,412.700 867.500,411.800 872.500,410.200 877.500,411.400 882.500,415.200 887.500,418.300 892.500,420.400 897.500,419.800 902.500,416.100 907.500,414.800 912.500,413.100 917.500,412.700 922.500,410.800 927.500,409.000 932.500,406.000 937.500,403.300 942.500,401.900 947.500,399.700 952.500,399.900 957.500,399.800 962.500,398.800 967.500,396.100 972.500,395.100 977.500,394.300 982.500,395.500 987.500,394.300 992.500,393.500 997.500,395.400 1002.500,395.500 1007.500,397.900 1012.500,401.800 1017.500,405.800 1022.500,410.100 1027.500,413.600 1032.500,415.000 1037.500,418.900 1042.500,422.700 1047.500,425.900 1052.500,431.400 1057.500,434.500 1062.500,436.500 1067.500,437.700 1072.500,438.600 1077.500,437.100 1082.500,435.700 1087.500,432.800 1092.500,430.600 1097.500,426.700 1102.500,422.000 1107.500,418.400 1112.500,415.000 1117.500,414.200 1122.500,413.300 1127.500,415.500 1132.500,417.900 1137.500,421.700 1142.500,424.000 1147.500,426.400 1152.500,428.900 1157.500,429.500 1162.500,431.600 1167.500,433.000 1172.500,434.200 1177.500,433.500 1182.500,431.900 1187.500,430.000 1192.500,429.600 1197.500,430.100 1202.500,429.600 1207.500,430.600 1212.500,429.900 1217.500,430.400 1222.500,429.700 1227.500,428.700 1232.500,427.900 1237.500,425.300 1242.500,421.600 1247.500,418.200 1252.500,414.200 1257.500,409.800 1262.500,406.700 1267.500,402.900 1272.500,399.700 1277.500,397.300 1282.500,395.100 1287.500,394.600 1292.500,393.200 1297.500,392.000 1302.500,390.700 1307.500,389.100 1312.500,388.000 1317.500,385.900 1322.500,383.600 1327.500,379.500 1332.500,376.100 1337.500,370.900 1342.500,365.700 1347.500,360.600 1352.500,355.500 1357.500,350.000 1362.500,343.600 1367.500,337.800 1372.500,331.600 1377.500,327.300 1382.500,323.100 1387.500,319.600 1392.500,317.500 1397.500,316.000 1402.500,315.800 1407.500,314.200 1412.500,311.500 1417.500,309.100 1422.500,307.400 1427.500,304.400 1432.500,300.400 1437.500,297.000 1442.500,292.800 1447.500,288.700 1452.500,283.600 1457.500,281.600 1462.500,280.800 1467.500,277.400 1472.500,274.700 1477.500,274.000 1482.500,274.600 1487.500,274.700 1492.500,275.600 1497.500,278.000 1502.500,281.400 1507.500,284.300" fill="none" stroke="#ff9a1e" stroke-width="1" stroke-linejoin="round"/>
<polyline points="32.500,249.100 37.500,248.100 42.500,246.500 47.500,248.400 52.500,252.500 57.500,251.200 62.500,252.100 67.500,248.400 72.500,242.100 77.500,235.000 82.500,232.200 87.500,229.000 92.500,225.700 97.500,222.700 102.500,219.400 107.500,215.200 112.500,210.700 117.500,208.300 122.500,210.100 127.500,214.800 132.500,221.900 137.500,228.100 142.500,232.700 147.500,230.700 152.500,232.100 157.500,229.600 162.500,226.500 167.500,228.600 172.500,233.000 177.500,231.300 182.500,234.100 187.500,242.200 192.500,258.700 197.500,294.600 202.500,322.200 207.500,349.600 212.500,369.100 217.500,369.000 222.500,353.300 227.500,347.100 232.500,336.600 237.500,331.400 242.500,334.300 247.500,329.300 252.500,323.500 257.500,320.200 262.500,315.800 267.500,312.800 272.500,315.000 277.500,317.700 282.500,316.500 287.500,316.800 292.500,318.200 297.500,317.200 302.500,315.800 307.500,319.300 312.500,322.100 317.500,324.400 322.500,325.200 327.500,324.800 332.500,322.900 337.500,320.800 342.500,318.500 347.500,316.700 352.500,313.900 357.500,307.900 362.500,304.200 367.500,299.800 372.500,297.500 377.500,297.200 382.500,302.700 387.500,306.800 392.500,311.300 397.500,315.800 402.500,319.500 407.500,321.400 412.500,322.100 417.500,323.900 422.500,325.500 427.500,330.000 432.500,331.000 437.500,332.200 442.500,331.200 447.500,327.200 452.500,321.700 457.500,321.700 462.500,322.600 467.500,324.900 472.500,329.500 477.500,334.400 482.500,336.400 487.500,336.000 492.500,334.500 497.500,332.700 502.500,330.700 507.500,331.800 512.500,334.800 517.500,336.900 522.500,338.900 527.500,337.400 532.500,333.600 537.500,327.400 542.500,323.000 547.500,319.400 552.500,316.600 557.500,312.800 562.500,309.400 567.500,302.400 572.500,295.800 577.500,290.400 582.500,285.400 587.500,280.300 592.500,278.000 597.500,279.400 602.500,281.500 607.500,284.200 612.500,287.100 617.500,290.800 622.500,289.100 627.500,288.300 632.500,284.400 637.500,283.000 642.500,279.000 647.500,278.500 652.500,280.700 657.500,286.600 662.500,288.200 667.500,293.100 672.500,300.600 677.500,305.300 682.500,315.300 687.500,331.600 692.500,348.200 697.500,359.200 702.500,371.500 707.500,377.500 712.500,377.600 717.500,374.700 722.500,374.300 727.500,375.000 732.500,379.800 737.500,388.400 742.500,395.200 747.500,403.200 752.500,406.200 757.500,404.700 762.500,400.500 767.500,396.400 772.500,390.500 777.500,384.900 782.500,382.200 787.500,383.700 792.500,390.600 797.500,394.200 802.500,399.600 807.500,403.300 812.500,407.800 817.500,407.300 822.500,412.100 827.500,414.200 832.500,412.000 837.500,408.500 842.500,406.000 847.500,405.100 852.500,410.400 857.500,415.200 862.500,416.800 867.500,417.600 872.500,415.300 877.500,412.400 882.500,415.200 887.500,419.800 892.500,423.200 897.500,424.400 902.500,419.800 907.500,414.500 912.500,406.400 917.500,402.200 922.500,397.200 927.500,398.100 932.500,397.500 937.500,400.100 942.500,401.600 947.500,402.300 952.500,401.800 957.500,402.100 962.500,397.400 967.500,390.500 972.500,388.000 977.500,386.800 982.500,389.000 987.500,391.200 992.500,396.600 997.500,402.800 1002.500,404.200 1007.500,406.800 1012.500,412.400 1017.500,415.000 1022.500,417.400 1027.500,423.000 1032.500,423.200 1037.500,425.500 1042.500,430.500 1047.500,434.400 1052.500,439.800 1057.500,445.900 1062.500,447.500 1067.500,445.000 1072.500,442.900 1077.500,434.500 1082.500,425.400 1087.500,418.100 1092.500,416.100 1097.500,410.500 1102.500,409.500 1107.500,411.300 1112.500,411.800 1117.500,412.200 1122.500,416.000 1127.500,421.600 1132.500,424.500 1137.500,431.600 1142.500,435.700 1147.500,436.700 1152.500,436.300 1157.500,434.600 1162.500,431.700 1167.500,430.300 1172.500,431.800 1177.500,430.800 1182.500,429.300 1187.500,428.300 1192.500,428.900 1197.500,428.400 1202.500,428.400 1207.500,431.800 1212.500,431.600 1217.500,431.900 1222.500,431.000 1227.500,429.000 1232.500,424.000 1237.500,418.900 1242.500,411.300 1247.500,405.400 1252.500,399.300 1257.500,395.600 1262.500,394.600 1267.500,394.500 1272.500,394.000 1277.500,395.300 1282.500,394.600 1287.500,394.600 1292.500,392.000 1297.500,390.000 1302.500,386.000 1307.500,383.600 1312.500,381.500 1317.500,379.900 1322.500,377.300 1327.500,372.900 1332.500,368.500 1337.500,360.200 1342.500,351.500 1347.500,343.800 1352.500,338.100 1357.500,331.500 1362.500,326.900 1367.500,324.000 1372.500,319.400 1377.500,316.400 1382.500,314.600 1387.500,312.300 1392.500,311.100 1397.500,312.500 1402.500,315.200 1407.500,313.800 1412.500,310.700 1417.500,307.100 1422.500,302.300 1427.500,293.700 1432.500,287.000 1437.500,283.400 1442.500,278.400 1447.500,275.000 1452.500,273.600 1457.500,276.100 1462.500,278.300 1467.500,276.400 1472.500,274.400 1477.500,274.500 1482.500,273.200 1487.500,271.100 1492.500,274.900 1497.500,281.600 1502.500,288.200 1507.500,295.400" fill="none" stroke="#22e81e" stroke-width="1" stroke-linejoin="round"/>
<path d="M22.500 536.500V534.900M27.500 536.500V534.400M32.500 536.500V534.400M37.500 536.500V533.700M42.500 536.500V534.500M47.500 536.500V534.900M57.500 536.500V534.900M62.500 536.500V534.900M67.500 536.500V534.300M72.500 536.500V533.500M77.500 536.500V532.800M82.500 536.500V532.800M87.500 536.500V533.000M92.500 536.500V532.500M97.500 536.500V532.300M102.500 536.500V531.900M107.500 536.500V531.900M112.500 536.500V532.100M117.500 536.500V532.500M122.500 536.500V534.700M247.500 536.500V534.200M252.500 536.500V531.500M257.500 536.500V530.100M262.500 536.500V529.100M267.500 536.500V529.400M272.500 536.500V530.000M277.500 536.500V530.400M282.500 536.500V529.300M287.500 536.500V529.400M292.500 536.500V530.800M297.500 536.500V531.100M302.500 536.500V531.200M307.500 536.500V532.000M312.500 536.500V532.900M317.500 536.500V534.500M322.500 536.500V534.100M327.500 536.500V533.100M332.500 536.500V532.600M337.500 536.500V532.500M342.500 536.500V533.500M347.500 536.500V533.000M352.500 536.500V531.600M357.500 536.500V529.600M362.500 536.500V529.800M367.500 536.500V530.900M372.500 536.500V531.500M377.500 536.500V531.800M382.500 536.500V533.400M387.500 536.500V534.900M447.500 536.500V534.900M452.500 536.500V534.900M457.500 536.500V534.900M462.500 536.500V534.900M497.500 536.500V534.900M502.500 536.500V534.900M507.500 536.500V534.900M527.500 536.500V534.900M532.500 536.500V534.100M537.500 536.500V533.000M542.500 536.500V533.200M547.500 536.500V533.000M552.500 536.500V531.900M557.500 536.500V531.200M562.500 536.500V530.700M567.500 536.500V529.800M572.500 536.500V529.400M577.500 536.500V528.900M582.500 536.500V529.000M587.500 536.500V529.100M592.500 536.500V530.100M597.500 536.500V532.400M602.500 536.500V533.800M607.500 536.500V534.900M612.500 536.500V534.900M767.500 536.500V534.200M772.500 536.500V532.500M777.500 536.500V530.400M782.500 536.500V530.300M787.500 536.500V531.600M792.500 536.500V534.000M797.500 536.500V533.900M802.500 536.500V533.600M807.500 536.500V533.800M812.500 536.500V534.900M817.500 536.500V534.900M827.500 536.500V534.900M832.500 536.500V533.300M837.500 536.500V533.000M842.500 536.500V532.500M847.500 536.500V533.800M852.500 536.500V534.900M857.500 536.500V534.900M862.500 536.500V534.800M867.500 536.500V533.700M872.500 536.500V533.200M877.500 536.500V534.000M882.500 536.500V534.900M892.500 536.500V534.900M897.500 536.500V534.900M902.500 536.500V532.700M907.500 536.500V531.800M912.500 536.500V530.800M917.500 536.500V530.900M922.500 536.500V530.100M927.500 536.500V531.000M932.500 536.500V531.500M937.500 536.500V532.800M942.500 536.500V533.800M947.500 536.500V533.200M952.500 536.500V533.500M957.500 536.500V534.000M962.500 536.500V533.000M967.500 536.500V531.700M972.500 536.500V531.600M977.500 536.500V533.000M982.500 536.500V534.900M987.500 536.500V534.900M1077.500 536.500V534.600M1082.500 536.500V532.700M1087.500 536.500V531.200M1092.500 536.500V531.400M1097.500 536.500V530.500M1102.500 536.500V530.700M1107.500 536.500V532.000M1112.500 536.500V532.100M1117.500 536.500V533.200M1122.500 536.500V534.300M1182.500 536.500V534.900M1187.500 536.500V534.900M1192.500 536.500V534.900M1197.500 536.500V534.900M1202.500 536.500V534.900M1212.500 536.500V534.900M1217.500 536.500V534.900M1222.500 536.500V534.900M1227.500 536.500V534.900M1232.500 536.500V533.700M1237.500 536.500V532.000M1242.500 536.500V531.100M1247.500 536.500V530.900M1252.500 536.500V530.200M1257.500 536.500V530.400M1262.500 536.500V531.000M1267.500 536.500V532.200M1272.500 536.500V533.000M1277.500 536.500V533.700M1282.500 536.500V533.800M1287.500 536.500V534.500M1292.500 536.500V534.500M1297.500 536.500V534.700M1302.500 536.500V534.100M1307.500 536.500V534.100M1312.500 536.500V534.900M1317.500 536.500V534.900M1322.500 536.500V534.900M1327.500 536.500V533.500M1332.500 536.500V533.000M1337.500 536.500V531.800M1342.500 536.500V530.800M1347.500 536.500V530.700M1352.500 536.500V530.300M1357.500 536.500V530.300M1362.500 536.500V530.500M1367.500 536.500V531.300M1372.500 536.500V531.600M1377.500 536.500V532.200M1382.500 536.500V533.200M1387.500 536.500V533.800M1392.500 536.500V534.900M1427.500 536.500V534.900M1432.500 536.500V534.900M1437.500 536.500V534.600M1442.500 536.500V534.600M1447.500 536.500V534.900M1452.500 536.500V534.900" stroke="#ff0000" stroke-width="1" fill="none"/>
<path d="M127.500 536.500V538.100M132.500 536.500V539.400M137.500 536.500V540.400M142.500 536.500V540.200M147.500 536.500V538.800M152.500 536.500V540.000M157.500 536.500V539.900M162.500 536.500V539.000M167.500 536.500V539.800M172.500 536.500V540.000M177.500 536.500V539.600M182.500 536.500V540.400M187.500 536.500V542.200M192.500 536.500V548.100M197.500 536.500V559.300M202.500 536.500V561.100M207.500 536.500V561.900M212.500 536.500V559.000M217.500 536.500V552.500M222.500 536.500V548.700M227.500 536.500V545.500M232.500 536.500V542.000M237.500 536.500V539.500M242.500 536.500V538.100M392.500 536.500V538.100M397.500 536.500V538.100M402.500 536.500V538.100M407.500 536.500V538.100M412.500 536.500V538.100M417.500 536.500V539.300M422.500 536.500V539.600M427.500 536.500V540.100M432.500 536.500V539.100M437.500 536.500V538.400M442.500 536.500V538.200M467.500 536.500V538.100M472.500 536.500V538.100M477.500 536.500V538.100M482.500 536.500V538.100M487.500 536.500V538.100M492.500 536.500V538.100M512.500 536.500V538.100M517.500 536.500V538.100M522.500 536.500V538.100M617.500 536.500V538.100M622.500 536.500V538.100M627.500 536.500V538.100M647.500 536.500V538.100M652.500 536.500V538.600M657.500 536.500V540.100M662.500 536.500V539.900M667.500 536.500V540.700M672.500 536.500V542.700M677.500 536.500V543.600M682.500 536.500V546.700M687.500 536.500V549.700M692.500 536.500V552.000M697.500 536.500V551.900M702.500 536.500V551.400M707.500 536.500V550.400M712.500 536.500V547.900M717.500 536.500V545.500M722.500 536.500V543.600M727.500 536.500V542.800M732.500 536.500V543.600M737.500 536.500V544.200M742.500 536.500V543.100M747.500 536.500V542.500M752.500 536.500V540.500M757.500 536.500V538.600M997.500 536.500V538.100M1002.500 536.500V538.100M1007.500 536.500V539.800M1012.500 536.500V540.800M1017.500 536.500V540.400M1022.500 536.500V540.600M1027.500 536.500V541.000M1032.500 536.500V540.800M1037.500 536.500V541.200M1042.500 536.500V541.500M1047.500 536.500V541.600M1052.500 536.500V542.500M1057.500 536.500V542.700M1062.500 536.500V541.300M1067.500 536.500V538.700M1072.500 536.500V538.100M1132.500 536.500V538.100M1137.500 536.500V538.900M1142.500 536.500V539.200M1147.500 536.500V538.200M1152.500 536.500V538.100M1157.500 536.500V538.100M1402.500 536.500V538.400M1407.500 536.500V538.200M1457.500 536.500V538.100M1462.500 536.500V538.900M1467.500 536.500V538.100M1472.500 536.500V538.100M1477.500 536.500V538.700M1482.500 536.500V539.700M1487.500 536.500V539.900M1492.500 536.500V540.700M1497.500 536.500V543.100M1502.500 536.500V544.900M1507.500 536.500V546.400" stroke="#0000ff" stroke-width="1" fill="none"/>
<polyline points="17.500,536.500 22.500,535.600 27.500,533.800 32.500,533.200 37.500,531.800 42.500,532.100 47.500,533.400 52.500,534.400 57.500,533.200 62.500,532.500 67.500,530.800 72.500,529.200 77.500,527.600 82.500,526.700 87.500,526.100 92.500,524.500 97.500,523.300 102.500,521.800 107.500,520.600 112.500,519.600 117.500,519.000 122.500,520.800 127.500,523.300 132.500,526.400 137.500,528.400 142.500,529.100 147.500,528.200 152.500,530.400 157.500,531.100 162.500,530.800 167.500,532.500 172.500,533.600 177.500,533.900 182.500,535.600 187.500,538.900 192.500,547.700 197.500,564.600 202.500,572.600 207.500,579.700 212.500,582.400 217.500,579.900 222.500,579.200 227.500,578.300 232.500,576.100 237.500,574.300 242.500,572.800 247.500,568.700 252.500,564.800 257.500,561.800 262.500,559.000 267.500,557.500 272.500,556.400 277.500,555.300 282.500,552.500 287.500,550.700 292.500,550.700 297.500,549.700 302.500,548.400 307.500,548.100 312.500,548.100 317.500,549.200 322.500,548.200 327.500,546.300 332.500,544.800 337.500,543.800 342.500,544.000 347.500,542.600 352.500,540.000 357.500,536.300 362.500,534.900 367.500,534.500 372.500,533.900 377.500,533.000 382.500,533.900 387.500,535.300 392.500,537.400 397.500,538.700 402.500,538.800 407.500,539.400 412.500,539.900 417.500,541.800 422.500,542.900 427.500,544.300 432.500,543.900 437.500,543.700 442.500,543.900 447.500,542.000 452.500,540.200 457.500,540.300 462.500,541.100 467.500,542.800 472.500,543.300 477.500,543.600 482.500,543.700 487.500,543.200 492.500,543.200 497.500,542.300 502.500,541.300 507.500,542.100 512.500,543.300 517.500,544.100 522.500,543.700 527.500,541.200 532.500,539.700 537.500,537.700 542.500,537.100 547.500,536.000 552.500,533.700 557.500,531.700 562.500,529.700 567.500,527.200 572.500,525.100 577.500,522.600 582.500,520.900 587.500,519.200 592.500,518.500 597.500,519.800 602.500,520.600 607.500,521.700 612.500,522.300 617.500,523.800 622.500,523.900 627.500,524.200 632.500,523.200 637.500,523.400 642.500,523.300 647.500,524.000 652.500,526.100 657.500,528.600 662.500,529.200 667.500,531.000 672.500,534.600 677.500,537.300 682.500,542.900 687.500,549.200 692.500,555.400 697.500,559.100 702.500,562.400 707.500,564.800 712.500,565.200 717.500,565.000 722.500,564.900 727.500,565.700 732.500,568.300 737.500,570.800 742.500,571.400 747.500,572.300 752.500,571.300 757.500,569.900 762.500,567.900 767.500,564.900 772.500,562.200 777.500,558.600 782.500,556.900 787.500,557.100 792.500,558.800 797.500,558.100 802.500,557.000 807.500,556.500 812.500,557.900 817.500,557.900 822.500,558.800 827.500,557.500 832.500,554.500 837.500,553.300 842.500,551.900 847.500,552.500 852.500,554.400 857.500,553.600 862.500,552.600 867.500,550.800 872.500,549.500 877.500,549.600 882.500,550.500 887.500,551.800 892.500,551.200 897.500,549.600 902.500,546.600 907.500,544.500 912.500,542.000 917.500,540.700 922.500,538.300 927.500,537.800 932.500,537.000 937.500,537.500 942.500,537.800 947.500,536.300 952.500,536.000 957.500,535.700 962.500,533.900 967.500,531.400 972.500,530.000 977.500,530.600 982.500,532.900 987.500,533.200 992.500,534.000 997.500,535.600 1002.500,535.900 1007.500,538.600 1012.500,540.700 1017.500,541.200 1022.500,542.400 1027.500,544.000 1032.500,544.800 1037.500,546.400 1042.500,548.000 1047.500,549.300 1052.500,551.700 1057.500,553.500 1062.500,553.300 1067.500,551.200 1072.500,549.900 1077.500,546.800 1082.500,544.000 1087.500,541.200 1092.500,540.100 1097.500,537.700 1102.500,536.400 1107.500,536.600 1112.500,535.600 1117.500,535.900 1122.500,536.400 1127.500,538.400 1132.500,539.700 1137.500,541.800 1142.500,542.800 1147.500,542.200 1152.500,542.500 1157.500,541.700 1162.500,541.500 1167.500,541.500 1172.500,541.700 1177.500,541.200 1182.500,539.600 1187.500,539.000 1192.500,539.700 1197.500,539.800 1202.500,539.500 1207.500,540.000 1212.500,539.000 1217.500,539.600 1222.500,539.100 1227.500,537.700 1232.500,535.800 1237.500,532.900 1242.500,530.700 1247.500,529.100 1252.500,526.800 1257.500,525.500 1262.500,524.800 1267.500,524.800 1272.500,524.700 1277.500,524.800 1282.500,524.200 1287.500,524.400 1292.500,523.800 1297.500,523.600 1302.500,522.500 1307.500,521.800 1312.500,522.200 1317.500,522.000 1322.500,521.600 1327.500,519.400 1332.500,517.900 1337.500,515.600 1342.500,513.200 1347.500,511.600 1352.500,509.700 1357.500,508.100 1362.500,506.900 1367.500,506.300 1372.500,505.400 1377.500,504.900 1382.500,505.100 1387.500,505.000 1392.500,506.000 1397.500,507.600 1402.500,509.900 1407.500,510.000 1412.500,508.800 1417.500,508.600 1422.500,508.700 1427.500,507.700 1432.500,506.300 1437.500,505.500 1442.500,505.100 1447.500,505.900 1452.500,506.400 1457.500,508.400 1462.500,510.100 1467.500,509.300 1472.500,509.700 1477.500,511.000 1482.500,512.800 1487.500,513.900 1492.500,515.800 1497.500,519.800 1502.500,523.700 1507.500,527.700" fill="none" stroke="#0a963c" stroke-width="1" stroke-linejoin="round"/>
<polyline points="17.500,536.500 22.500,536.300 27.500,535.800 32.500,535.300 37.500,534.600 42.500,534.100 47.500,533.900 52.500,534.000 57.500,533.900 62.500,533.600 67.500,533.000 72.500,532.300 77.500,531.300 82.500,530.400 87.500,529.500 92.500,528.500 97.500,527.500 102.500,526.300 107.500,525.200 112.500,524.100 117.500,523.100 122.500,522.600 127.500,522.700 132.500,523.500 137.500,524.500 142.500,525.400 147.500,526.000 152.500,526.800 157.500,527.700 162.500,528.300 167.500,529.200 172.500,530.000 177.500,530.800 182.500,531.800 187.500,533.200 192.500,536.100 197.500,541.800 202.500,548.000 207.500,554.300 212.500,559.900 217.500,563.900 222.500,567.000 227.500,569.200 232.500,570.600 237.500,571.300 242.500,571.600 247.500,571.000 252.500,569.800 257.500,568.200 262.500,566.300 267.500,564.600 272.500,562.900 277.500,561.400 282.500,559.600 287.500,557.800 292.500,556.400 297.500,555.100 302.500,553.700 307.500,552.600 312.500,551.700 317.500,551.200 322.500,550.600 327.500,549.700 332.500,548.800 337.500,547.800 342.500,547.000 347.500,546.100 352.500,544.900 357.500,543.200 362.500,541.500 367.500,540.100 372.500,538.900 377.500,537.700 382.500,537.000 387.500,536.600 392.500,536.800 397.500,537.200 402.500,537.500 407.500,537.900 412.500,538.300 417.500,539.000 422.500,539.800 427.500,540.700 432.500,541.300 437.500,541.800 442.500,542.200 447.500,542.200 452.500,541.800 457.500,541.500 462.500,541.400 467.500,541.700 472.500,542.000 477.500,542.300 482.500,542.600 487.500,542.700 492.500,542.800 497.500,542.700 502.500,542.400 507.500,542.400 512.500,542.600 517.500,542.900 522.500,543.000 527.500,542.700 532.500,542.100 537.500,541.200 542.500,540.400 547.500,539.500 552.500,538.300 557.500,537.000 562.500,535.600 567.500,533.900 572.500,532.100 577.500,530.200 582.500,528.400 587.500,526.500 592.500,524.900 597.500,523.900 602.500,523.200 607.500,522.900 612.500,522.800 617.500,523.000 622.500,523.200 627.500,523.400 632.500,523.300 637.500,523.400 642.500,523.400 647.500,523.500 652.500,524.000 657.500,524.900 662.500,525.800 667.500,526.800 672.500,528.400 677.500,530.200 682.500,532.700 687.500,536.000 692.500,539.900 697.500,543.700 702.500,547.500 707.500,551.000 712.500,553.800 717.500,556.000 722.500,557.800 727.500,559.400 732.500,561.200 737.500,563.100 742.500,564.800 747.500,566.300 752.500,567.300 757.500,567.800 762.500,567.800 767.500,567.200 772.500,566.200 777.500,564.700 782.500,563.100 787.500,561.900 792.500,561.300 797.500,560.600 802.500,559.900 807.500,559.200 812.500,559.000 817.500,558.800 822.500,558.800 827.500,558.500 832.500,557.700 837.500,556.800 842.500,555.800 847.500,555.200 852.500,555.000 857.500,554.700 862.500,554.300 867.500,553.600 872.500,552.800 877.500,552.200 882.500,551.800 887.500,551.800 892.500,551.700 897.500,551.300 902.500,550.300 907.500,549.200 912.500,547.700 917.500,546.300 922.500,544.700 927.500,543.300 932.500,542.100 937.500,541.100 942.500,540.500 947.500,539.700 952.500,538.900 957.500,538.300 962.500,537.400 967.500,536.200 972.500,535.000 977.500,534.100 982.500,533.900 987.500,533.700 992.500,533.800 997.500,534.100 1002.500,534.500 1007.500,535.300 1012.500,536.400 1017.500,537.300 1022.500,538.400 1027.500,539.500 1032.500,540.600 1037.500,541.700 1042.500,543.000 1047.500,544.300 1052.500,545.800 1057.500,547.300 1062.500,548.500 1067.500,549.000 1072.500,549.200 1077.500,548.700 1082.500,547.800 1087.500,546.500 1092.500,545.200 1097.500,543.700 1102.500,542.200 1107.500,541.100 1112.500,540.000 1117.500,539.200 1122.500,538.600 1127.500,538.600 1132.500,538.800 1137.500,539.400 1142.500,540.100 1147.500,540.500 1152.500,540.900 1157.500,541.000 1162.500,541.100 1167.500,541.200 1172.500,541.300 1177.500,541.300 1182.500,540.900 1187.500,540.600 1192.500,540.400 1197.500,540.300 1202.500,540.100 1207.500,540.100 1212.500,539.900 1217.500,539.800 1222.500,539.700 1227.500,539.300 1232.500,538.600 1237.500,537.400 1242.500,536.100 1247.500,534.700 1252.500,533.100 1257.500,531.600 1262.500,530.200 1267.500,529.200 1272.500,528.300 1277.500,527.600 1282.500,526.900 1287.500,526.400 1292.500,525.900 1297.500,525.400 1302.500,524.800 1307.500,524.200 1312.500,523.800 1317.500,523.500 1322.500,523.100 1327.500,522.300 1332.500,521.500 1337.500,520.300 1342.500,518.900 1347.500,517.400 1352.500,515.900 1357.500,514.300 1362.500,512.800 1367.500,511.500 1372.500,510.300 1377.500,509.200 1382.500,508.400 1387.500,507.700 1392.500,507.400 1397.500,507.400 1402.500,507.900 1407.500,508.300 1412.500,508.400 1417.500,508.500 1422.500,508.500 1427.500,508.300 1432.500,507.900 1437.500,507.500 1442.500,507.000 1447.500,506.800 1452.500,506.700 1457.500,507.000 1462.500,507.600 1467.500,508.000 1472.500,508.300 1477.500,508.900 1482.500,509.700 1487.500,510.500 1492.500,511.600 1497.500,513.200 1502.500,515.300 1507.500,517.800" fill="none" stroke="#e8590c" stroke-width="1" stroke-linejoin="round"/>
<line x1="10" y1="536.500" x2="1507" y2="536.500" stroke="#ff00cc" stroke-width="1" />
<line x1="10" y1="633.500" x2="1507" y2="633.500" stroke="#1565c8" stroke-width="1" />
<line x1="10" y1="670.500" x2="1507" y2="670.500" stroke="#e8590c" stroke-width="1" />
<polyline points="82.500,645.900 87.500,637.600 92.500,636.700 97.500,639.800 102.500,632.500 107.500,634.600 112.500,623.300 117.500,612.100 122.500,631.800 127.500,646.400 132.500,651.600 137.500,654.500 142.500,651.400 147.500,646.600 152.500,657.300 157.500,653.300 162.500,654.000 167.500,660.500 172.500,662.000 177.500,660.700 182.500,664.700 187.500,668.600 192.500,674.700 197.500,682.000 202.500,670.600 207.500,672.800 212.500,670.200 217.500,665.900 222.500,665.100 227.500,666.800 232.500,666.700 237.500,665.500 242.500,666.100 247.500,663.100 252.500,661.200 257.500,659.600 262.500,650.800 267.500,629.000 272.500,637.900 277.500,632.400 282.500,633.500 287.500,648.700 292.500,647.600 297.500,643.500 302.500,646.300 307.500,648.100 312.500,648.500 317.500,666.100 322.500,658.300 327.500,653.200 332.500,653.800 337.500,650.700 342.500,654.200 347.500,648.900 352.500,649.900 357.500,642.200 362.500,641.800 367.500,647.700 372.500,647.400 377.500,642.700 382.500,647.400 387.500,645.100 392.500,654.600 397.500,656.800 402.500,653.200 407.500,654.300 412.500,650.400 417.500,661.700 422.500,666.700 427.500,678.100 432.500,665.700 437.500,663.900 442.500,667.200 447.500,659.200 452.500,652.200 457.500,655.800 462.500,654.800 467.500,660.400 472.500,661.300 477.500,659.200 482.500,658.700 487.500,649.700 492.500,653.700 497.500,646.700 502.500,652.400 507.500,658.700 512.500,659.700 517.500,671.700 522.500,666.600 527.500,648.700 532.500,646.600 537.500,637.100 542.500,645.700 547.500,643.700 552.500,638.700 557.500,639.400 562.500,635.600 567.500,635.100 572.500,634.800 577.500,622.300 582.500,618.000 587.500,617.400 592.500,622.500 597.500,639.200 602.500,635.200 607.500,639.600 612.500,631.800 617.500,640.000 622.500,641.100 627.500,641.800 632.500,638.700 637.500,648.000 642.500,647.300 647.500,654.600 652.500,660.600 657.500,665.700 662.500,657.200 667.500,655.800 672.500,664.500 677.500,663.400 682.500,672.900 687.500,674.600 692.500,681.700 697.500,677.700 702.500,683.900 707.500,683.200 712.500,680.000 717.500,678.600 722.500,677.200 727.500,678.000 732.500,686.700 737.500,686.400 742.500,679.200 747.500,680.600 752.500,669.100 757.500,663.300 762.500,656.300 767.500,656.000 772.500,653.400 777.500,648.400 782.500,657.900 787.500,663.500 792.500,666.900 797.500,657.600 802.500,650.100 807.500,648.600 812.500,659.000 817.500,653.300 822.500,661.300 827.500,656.100 832.500,652.300 837.500,658.900 842.500,658.000 847.500,665.700 852.500,666.200 857.500,656.500 862.500,651.500 867.500,654.200 872.500,655.500 877.500,657.700 882.500,654.500 887.500,659.300 892.500,652.100 897.500,654.300 902.500,654.600 907.500,651.600 912.500,650.400 917.500,646.000 922.500,635.500 927.500,647.600 932.500,647.100 937.500,653.600 942.500,652.900 947.500,642.000 952.500,641.800 957.500,638.500 962.500,637.900 967.500,637.400 972.500,644.800 977.500,649.400 982.500,658.200 987.500,650.700 992.500,656.900 997.500,655.400 1002.500,653.200 1007.500,657.500 1012.500,657.100 1017.500,659.700 1022.500,659.800 1027.500,661.400 1032.500,666.300 1037.500,673.200 1042.500,673.100 1047.500,670.500 1052.500,669.700 1057.500,679.200 1062.500,669.900 1067.500,658.900 1072.500,664.900 1077.500,648.000 1082.500,647.100 1087.500,649.200 1092.500,650.100 1097.500,642.200 1102.500,645.900 1107.500,646.300 1112.500,641.300 1117.500,644.300 1122.500,639.700 1127.500,645.600 1132.500,649.100 1137.500,659.600 1142.500,655.600 1147.500,658.100 1152.500,661.900 1157.500,659.800 1162.500,658.000 1167.500,665.400 1172.500,664.400 1177.500,657.100 1182.500,656.800 1187.500,655.800 1192.500,658.500 1197.500,650.400 1202.500,649.800 1207.500,647.700 1212.500,644.900 1217.500,657.200 1222.500,649.300 1227.500,649.400 1232.500,643.400 1237.500,638.200 1242.500,636.900 1247.500,638.400 1252.500,638.900 1257.500,636.800 1262.500,630.500 1267.500,635.100 1272.500,635.200 1277.500,630.100 1282.500,631.700 1287.500,624.100 1292.500,624.400 1297.500,627.400 1302.500,626.900 1307.500,633.100 1312.500,639.800 1317.500,637.100 1322.500,639.800 1327.500,628.200 1332.500,628.200 1337.500,620.200 1342.500,619.400 1347.500,619.800 1352.500,619.500 1357.500,614.800 1362.500,615.300 1367.500,616.000 1372.500,616.300 1377.500,615.200 1382.500,611.400 1387.500,611.300 1392.500,619.000 1397.500,628.500 1402.500,632.800 1407.500,631.300 1412.500,628.900 1417.500,632.200 1422.500,634.800 1427.500,631.600 1432.500,630.400 1437.500,629.400 1442.500,631.200 1447.500,636.200 1452.500,633.300 1457.500,642.800 1462.500,638.000 1467.500,629.000 1472.500,629.700 1477.500,637.900 1482.500,646.500 1487.500,641.300 1492.500,646.000 1497.500,661.400 1502.500,667.500 1507.500,670.000" fill="none" stroke="#0a963c" stroke-width="1" stroke-linejoin="round"/>
<line x1="10" y1="726.500" x2="1507" y2="726.500" stroke="#e8590c" stroke-width="1" />
<polyline points="107.500,719.900 112.500,720.100 117.500,720.600 122.500,725.000 127.500,726.900 132.500,729.200 137.500,727.900 142.500,726.300 147.500,723.800 152.500,729.600 157.500,727.600 162.500,725.900 167.500,729.700 172.500,729.100 177.500,727.900 182.500,730.600 187.500,734.000 192.500,745.900 197.500,764.700 202.500,752.900 207.500,753.900 212.500,747.400 217.500,737.400 222.500,740.000 227.500,739.100 232.500,736.000 237.500,736.000 242.500,735.200 247.500,728.700 252.500,727.200 257.500,726.900 262.500,725.600 267.500,726.800 272.500,726.500 277.500,725.300 282.500,720.500 287.500,721.400 292.500,724.900 297.500,723.900 302.500,724.000 307.500,726.600 312.500,727.700 317.500,730.300 322.500,726.600 327.500,724.900 332.500,725.100 337.500,725.800 342.500,728.500 347.500,725.200 352.500,722.000 357.500,718.700 362.500,722.100 367.500,724.100 372.500,723.500 377.500,722.900 382.500,726.100 387.500,727.600 392.500,729.900 397.500,729.000 402.500,727.000 407.500,728.200 412.500,728.400 417.500,732.000 422.500,730.900 427.500,732.100 432.500,728.900 437.500,729.300 442.500,730.000 447.500,725.700 452.500,725.000 457.500,728.000 462.500,729.300 467.500,731.300 472.500,729.300 477.500,728.700 482.500,728.300 487.500,727.200 492.500,728.000 497.500,726.100 502.500,725.600 507.500,729.000 512.500,730.000 517.500,729.800 522.500,727.700 527.500,723.300 532.500,724.300 537.500,722.800 542.500,725.000 547.500,723.700 552.500,720.400 557.500,720.200 562.500,719.500 567.500,717.900 572.500,717.800 577.500,716.600 582.500,717.400 587.500,716.900 592.500,718.700 597.500,722.700 602.500,722.100 607.500,723.400 612.500,723.200 617.500,725.800 622.500,723.700 627.500,724.100 632.500,721.800 637.500,724.200 642.500,723.700 647.500,725.500 652.500,728.800 657.500,730.200 662.500,727.300 667.500,729.900 672.500,733.900 677.500,733.400 682.500,740.100 687.500,743.300 692.500,745.300 697.500,742.300 702.500,742.800 707.500,742.000 712.500,738.400 717.500,737.300 722.500,737.100 727.500,738.800 732.500,742.400 737.500,742.900 742.500,739.000 747.500,739.600 752.500,735.200 757.500,733.500 762.500,731.000 767.500,727.500 772.500,726.600 777.500,723.000 782.500,725.900 787.500,729.600 792.500,733.600 797.500,729.000 802.500,728.200 807.500,729.100 812.500,733.500 817.500,730.900 822.500,732.800 827.500,728.400 832.500,724.100 837.500,727.700 842.500,726.900 847.500,731.500 852.500,735.100 857.500,729.600 862.500,728.800 867.500,726.600 872.500,726.900 877.500,729.500 882.500,731.100 887.500,732.600 892.500,728.900 897.500,726.400 902.500,722.200 907.500,723.200 912.500,721.800 917.500,723.700 922.500,720.800 927.500,724.400 932.500,723.400 937.500,725.900 942.500,725.900 947.500,721.900 952.500,724.400 957.500,724.700 962.500,721.000 967.500,718.600 972.500,720.300 977.500,724.500 982.500,729.300 987.500,725.800 992.500,727.500 997.500,729.900 1002.500,727.400 1007.500,733.300 1012.500,732.700 1017.500,730.100 1022.500,731.800 1027.500,733.100 1032.500,731.900 1037.500,734.200 1042.500,734.900 1047.500,734.900 1052.500,737.900 1057.500,737.300 1062.500,733.100 1067.500,727.900 1072.500,728.500 1077.500,723.400 1082.500,722.600 1087.500,721.400 1092.500,723.900 1097.500,720.300 1102.500,721.700 1107.500,724.700 1112.500,722.100 1117.500,724.600 1122.500,725.600 1127.500,729.300 1132.500,728.600 1137.500,731.300 1142.500,729.900 1147.500,726.800 1152.500,729.000 1157.500,727.100 1162.500,728.500 1167.500,728.900 1172.500,729.500 1177.500,727.900 1182.500,724.800 1187.500,726.400 1192.500,728.900 1197.500,727.700 1202.500,726.500 1207.500,728.100 1212.500,724.800 1217.500,728.000 1222.500,725.400 1227.500,723.400 1232.500,721.300 1237.500,718.700 1242.500,719.300 1247.500,719.600 1252.500,717.600 1257.500,719.100 1262.500,719.800 1267.500,721.700 1272.500,721.500 1277.500,721.900 1282.500,720.500 1287.500,722.200 1292.500,720.700 1297.500,721.500 1302.500,719.500 1307.500,720.600 1312.500,722.700 1317.500,722.100 1322.500,721.600 1327.500,717.600 1332.500,718.600 1337.500,715.900 1342.500,714.800 1347.500,715.800 1352.500,714.400 1357.500,714.400 1362.500,714.500 1367.500,715.900 1372.500,715.000 1377.500,715.900 1382.500,717.400 1387.500,717.000 1392.500,719.600 1397.500,721.700 1402.500,723.700 1407.500,720.300 1412.500,717.700 1417.500,719.800 1422.500,720.500 1427.500,718.200 1432.500,717.300 1437.500,718.100 1442.500,718.500 1447.500,720.700 1452.500,720.400 1457.500,723.600 1462.500,723.600 1467.500,719.100 1472.500,721.100 1477.500,723.000 1482.500,724.500 1487.500,723.500 1492.500,725.700 1497.500,730.700 1502.500,732.100 1507.500,733.900" fill="none" stroke="#0a963c" stroke-width="1" stroke-linejoin="round"/>
<line x1="10" y1="804.500" x2="1507" y2="804.500" stroke="#1565c8" stroke-width="1" />
<line x1="10" y1="867.500" x2="1507" y2="867.500" stroke="#e8590c" stroke-width="1" />
<polyline points="67.500,836.000 72.500,825.600 77.500,815.200 82.500,825.600 87.500,836.000 92.500,825.600 97.500,825.600 102.500,815.200 107.500,804.800 112.500,804.800 117.500,804.800 122.500,804.800 127.500,815.200 132.500,825.600 137.500,825.600 142.500,815.200 147.500,804.800 152.500,815.200 157.500,815.200 162.500,815.200 167.500,825.600 172.500,825.600 177.500,825.600 182.500,825.600 187.500,825.600 192.500,825.600 197.500,836.000 202.500,836.000 207.500,846.400 212.500,836.000 217.500,836.000 222.500,846.400 227.500,846.400 232.500,846.400 237.500,856.800 242.500,856.800 247.500,846.400 252.500,836.000 257.500,836.000 262.500,836.000 267.500,836.000 272.500,846.400 277.500,846.400 282.500,836.000 287.500,836.000 292.500,846.400 297.500,836.000 302.500,825.600 307.500,836.000 312.500,846.400 317.500,846.400 322.500,846.400 327.500,836.000 332.500,836.000 337.500,846.400 342.500,856.800 347.500,846.400 352.500,836.000 357.500,836.000 362.500,846.400 367.500,846.400 372.500,836.000 377.500,825.600 382.500,836.000 387.500,846.400 392.500,846.400 397.500,836.000 402.500,825.600 407.500,836.000 412.500,846.400 417.500,856.800 422.500,846.400 427.500,846.400 432.500,846.400 437.500,856.800 442.500,856.800 447.500,846.400 452.500,836.000 457.500,846.400 462.500,856.800 467.500,856.800 472.500,846.400 477.500,836.000 482.500,836.000 487.500,825.600 492.500,836.000 497.500,825.600 502.500,815.200 507.500,825.600 512.500,836.000 517.500,825.600 522.500,815.200 527.500,804.800 532.500,815.200 537.500,815.200 542.500,825.600 547.500,825.600 552.500,815.200 557.500,815.200 562.500,815.200 567.500,804.800 572.500,794.300 577.500,794.300 582.500,804.800 587.500,804.800 592.500,804.800 597.500,815.200 602.500,804.800 607.500,815.200 612.500,815.200 617.500,825.600 622.500,825.600 627.500,825.600 632.500,825.600 637.500,836.000 642.500,825.600 647.500,836.000 652.500,836.000 657.500,836.000 662.500,836.000 667.500,836.000 672.500,846.400 677.500,836.000 682.500,846.400 687.500,856.800 692.500,867.200 697.500,856.800 702.500,867.200 707.500,867.200 712.500,856.800 717.500,846.400 722.500,856.800 727.500,856.800 732.500,856.800 737.500,867.200 742.500,856.800 747.500,856.800 752.500,846.400 757.500,846.400 762.500,836.000 767.500,825.600 772.500,825.600 777.500,825.600 782.500,825.600 787.500,825.600 792.500,825.600 797.500,815.200 802.500,815.200 807.500,815.200 812.500,825.600 817.500,825.600 822.500,836.000 827.500,836.000 832.500,836.000 837.500,846.400 842.500,836.000 847.500,836.000 852.500,836.000 857.500,836.000 862.500,836.000 867.500,825.600 872.500,825.600 877.500,836.000 882.500,836.000 887.500,846.400 892.500,846.400 897.500,836.000 902.500,836.000 907.500,836.000 912.500,825.600 917.500,836.000 922.500,836.000 927.500,846.400 932.500,836.000 937.500,836.000 942.500,836.000 947.500,825.600 952.500,836.000 957.500,846.400 962.500,846.400 967.500,836.000 972.500,846.400 977.500,846.400 982.500,856.800 987.500,846.400 992.500,856.800 997.500,856.800 1002.500,846.400 1007.500,856.800 1012.500,846.400 1017.500,836.000 1022.500,846.400 1027.500,856.800 1032.500,846.400 1037.500,846.400 1042.500,846.400 1047.500,856.800 1052.500,856.800 1057.500,856.800 1062.500,856.800 1067.500,846.400 1072.500,856.800 1077.500,856.800 1082.500,846.400 1087.500,836.000 1092.500,846.400 1097.500,836.000 1102.500,836.000 1107.500,836.000 1112.500,825.600 1117.500,825.600 1122.500,836.000 1127.500,846.400 1132.500,836.000 1137.500,846.400 1142.500,846.400 1147.500,846.400 1152.500,846.400 1157.500,846.400 1162.500,846.400 1167.500,846.400 1172.500,856.800 1177.500,846.400 1182.500,836.000 1187.500,836.000 1192.500,846.400 1197.500,836.000 1202.500,836.000 1207.500,846.400 1212.500,836.000 1217.500,846.400 1222.500,836.000 1227.500,825.600 1232.500,815.200 1237.500,815.200 1242.500,825.600 1247.500,815.200 1252.500,804.800 1257.500,815.200 1262.500,825.600 1267.500,825.600 1272.500,825.600 1277.500,815.200 1282.500,815.200 1287.500,825.600 1292.500,825.600 1297.500,836.000 1302.500,825.600 1307.500,836.000 1312.500,846.400 1317.500,836.000 1322.500,825.600 1327.500,815.200 1332.500,825.600 1337.500,825.600 1342.500,825.600 1347.500,825.600 1352.500,825.600 1357.500,815.200 1362.500,815.200 1367.500,815.200 1372.500,804.800 1377.500,804.800 1382.500,815.200 1387.500,815.200 1392.500,815.200 1397.500,825.600 1402.500,836.000 1407.500,825.600 1412.500,825.600 1417.500,836.000 1422.500,836.000 1427.500,825.600 1432.500,825.600 1437.500,825.600 1442.500,815.200 1447.500,825.600 1452.500,815.200 1457.500,815.200 1462.500,804.800 1467.500,804.800 1472.500,815.200 1477.500,815.200 1482.500,825.600 1487.500,825.600 1492.500,836.000 1497.500,846.400 1502.500,856.800 1507.500,856.800" fill="none" stroke="#0a963c" stroke-width="1" stroke-linejoin="round"/>
<rect x="10" y="949" width="1518" height="2" fill="#000" />
<path d="M11 935h3v19h-3zM16 928h3v26h-3zM21 937h3v17h-3zM26 936h3v18h-3zM31 939h3v15h-3zM36 935h3v19h-3zM41 934h3v20h-3zM46 936h3v18h-3zM51 935h3v19h-3zM56 931h3v23h-3zM61 935h3v19h-3zM66 930h3v24h-3zM71 934h3v20h-3zM76 934h3v20h-3zM81 932h3v22h-3zM86 934h3v20h-3zM91 934h3v20h-3zM96 935h3v19h-3zM101 929h3v25h-3zM106 931h3v23h-3zM111 934h3v20h-3zM116 934h3v20h-3zM121 930h3v24h-3zM126 930h3v24h-3zM131 929h3v25h-3zM136 934h3v20h-3zM141 930h3v24h-3zM146 933h3v21h-3zM151 933h3v21h-3zM156 937h3v17h-3zM161 932h3v22h-3zM166 933h3v21h-3zM171 933h3v21h-3zM176 936h3v18h-3zM181 936h3v18h-3zM186 923h3v31h-3zM191 906h3v48h-3zM196 897h3v57h-3zM201 905h3v49h-3zM206 914h3v40h-3zM211 922h3v32h-3zM216 918h3v36h-3zM221 915h3v39h-3zM226 922h3v32h-3zM231 923h3v31h-3zM236 926h3v28h-3zM241 926h3v28h-3zM246 924h3v30h-3zM251 928h3v26h-3zM256 928h3v26h-3zM261 930h3v24h-3zM266 929h3v25h-3zM271 928h3v26h-3zM276 933h3v21h-3zM281 927h3v27h-3zM286 935h3v19h-3zM291 933h3v21h-3zM296 934h3v20h-3zM301 933h3v21h-3zM306 934h3v20h-3zM311 939h3v15h-3zM316 937h3v17h-3zM321 938h3v16h-3zM326 939h3v15h-3zM331 938h3v16h-3zM336 941h3v13h-3zM341 940h3v14h-3zM346 938h3v16h-3zM351 933h3v21h-3zM356 937h3v17h-3zM361 936h3v18h-3zM366 938h3v16h-3zM371 936h3v18h-3zM376 935h3v19h-3zM381 935h3v19h-3zM386 927h3v27h-3zM391 937h3v17h-3zM396 936h3v18h-3zM401 937h3v17h-3zM406 939h3v15h-3zM411 939h3v15h-3zM416 937h3v17h-3zM421 939h3v15h-3zM426 939h3v15h-3zM431 939h3v15h-3zM436 940h3v14h-3zM441 942h3v12h-3zM446 932h3v22h-3zM451 935h3v19h-3zM456 935h3v19h-3zM461 939h3v15h-3zM466 936h3v18h-3zM471 938h3v16h-3zM476 939h3v15h-3zM481 937h3v17h-3zM486 931h3v23h-3zM491 941h3v13h-3zM496 936h3v18h-3zM501 935h3v19h-3zM506 937h3v17h-3zM511 936h3v18h-3zM516 939h3v15h-3zM521 939h3v15h-3zM526 936h3v18h-3zM531 938h3v16h-3zM536 938h3v16h-3zM541 939h3v15h-3zM546 938h3v16h-3zM551 939h3v15h-3zM556 936h3v18h-3zM561 939h3v15h-3zM566 936h3v18h-3zM571 937h3v17h-3zM576 937h3v17h-3zM581 937h3v17h-3zM586 937h3v17h-3zM591 940h3v14h-3zM596 937h3v17h-3zM601 938h3v16h-3zM606 938h3v16h-3zM611 941h3v13h-3zM616 940h3v14h-3zM621 940h3v14h-3zM626 937h3v17h-3zM631 938h3v16h-3zM636 941h3v13h-3zM641 939h3v15h-3zM646 938h3v16h-3zM651 937h3v17h-3zM656 936h3v18h-3zM661 936h3v18h-3zM666 939h3v15h-3zM671 937h3v17h-3zM676 935h3v19h-3zM681 930h3v24h-3zM686 935h3v19h-3zM691 922h3v32h-3zM696 933h3v21h-3zM701 933h3v21h-3zM706 935h3v19h-3zM711 940h3v14h-3zM716 939h3v15h-3zM721 939h3v15h-3zM726 938h3v16h-3zM731 935h3v19h-3zM736 936h3v18h-3zM741 934h3v20h-3zM746 933h3v21h-3zM751 935h3v19h-3zM756 936h3v18h-3zM761 936h3v18h-3zM766 937h3v17h-3zM771 937h3v17h-3zM776 938h3v16h-3zM781 938h3v16h-3zM786 939h3v15h-3zM791 934h3v20h-3zM796 938h3v16h-3zM801 941h3v13h-3zM806 933h3v21h-3zM811 938h3v16h-3zM816 938h3v16h-3zM821 938h3v16h-3zM826 938h3v16h-3zM831 936h3v18h-3zM836 941h3v13h-3zM841 941h3v13h-3zM846 938h3v16h-3zM851 934h3v20h-3zM856 936h3v18h-3zM861 937h3v17h-3zM866 934h3v20h-3zM871 935h3v19h-3zM876 936h3v18h-3zM881 935h3v19h-3zM886 935h3v19h-3zM891 939h3v15h-3zM896 939h3v15h-3zM901 940h3v14h-3zM906 940h3v14h-3zM911 940h3v14h-3zM916 940h3v14h-3zM921 941h3v13h-3zM926 944h3v10h-3zM931 942h3v12h-3zM936 941h3v13h-3zM941 942h3v12h-3zM946 942h3v12h-3zM951 941h3v13h-3zM956 941h3v13h-3zM961 937h3v17h-3zM966 934h3v20h-3zM971 938h3v16h-3zM976 941h3v13h-3zM981 938h3v16h-3zM986 939h3v15h-3zM991 941h3v13h-3zM996 937h3v17h-3zM1001 937h3v17h-3zM1006 936h3v18h-3zM1011 939h3v15h-3zM1016 941h3v13h-3zM1021 943h3v11h-3zM1026 942h3v12h-3zM1031 940h3v14h-3zM1036 941h3v13h-3zM1041 943h3v11h-3zM1046 940h3v14h-3zM1051 940h3v14h-3zM1056 940h3v14h-3zM1061 942h3v12h-3zM1066 940h3v14h-3zM1071 938h3v16h-3zM1076 935h3v19h-3zM1081 940h3v14h-3zM1086 941h3v13h-3zM1091 939h3v15h-3zM1096 937h3v17h-3zM1101 938h3v16h-3zM1106 929h3v25h-3zM1111 940h3v14h-3zM1116 939h3v15h-3zM1121 940h3v14h-3zM1126 940h3v14h-3zM1131 941h3v13h-3zM1136 941h3v13h-3zM1141 944h3v10h-3zM1146 943h3v11h-3zM1151 944h3v10h-3zM1156 947h3v7h-3zM1161 948h3v6h-3zM1166 945h3v9h-3zM1171 946h3v8h-3zM1176 947h3v7h-3zM1181 941h3v13h-3zM1186 943h3v11h-3zM1191 940h3v14h-3zM1196 939h3v15h-3zM1201 939h3v15h-3zM1206 942h3v12h-3zM1211 938h3v16h-3zM1216 942h3v12h-3zM1221 938h3v16h-3zM1226 932h3v22h-3zM1231 934h3v20h-3zM1236 929h3v25h-3zM1241 935h3v19h-3zM1246 937h3v17h-3zM1251 933h3v21h-3zM1256 936h3v18h-3zM1261 936h3v18h-3zM1266 939h3v15h-3zM1271 935h3v19h-3zM1276 934h3v20h-3zM1281 933h3v21h-3zM1286 932h3v22h-3zM1291 933h3v21h-3zM1296 934h3v20h-3zM1301 930h3v24h-3zM1306 928h3v26h-3zM1311 932h3v22h-3zM1316 935h3v19h-3zM1321 933h3v21h-3zM1326 926h3v28h-3zM1331 931h3v23h-3zM1336 929h3v25h-3zM1341 931h3v23h-3zM1346 931h3v23h-3zM1351 931h3v23h-3zM1356 930h3v24h-3zM1361 930h3v24h-3zM1366 930h3v24h-3zM1371 930h3v24h-3zM1376 924h3v30h-3zM1381 929h3v25h-3zM1386 933h3v21h-3zM1391 936h3v18h-3zM1396 930h3v24h-3zM1401 933h3v21h-3zM1406 934h3v20h-3zM1411 920h3v34h-3zM1416 933h3v21h-3zM1421 928h3v26h-3zM1426 932h3v22h-3zM1431 931h3v23h-3zM1436 933h3v21h-3zM1441 936h3v18h-3zM1446 934h3v20h-3zM1451 935h3v19h-3zM1456 938h3v16h-3zM1461 937h3v17h-3zM1466 933h3v21h-3zM1471 936h3v18h-3zM1476 935h3v19h-3zM1481 936h3v18h-3zM1486 934h3v20h-3zM1491 939h3v15h-3zM1496 934h3v20h-3zM1501 933h3v21h-3zM1506 939h3v15h-3z" fill="#0a963c"/>
<rect x="10" y="481" width="1518" height="2" fill="#000" />
<rect x="10" y="589" width="1518" height="2" fill="#000" />
<rect x="10" y="691" width="1518" height="2" fill="#000" />
<rect x="10" y="769" width="1518" height="2" fill="#000" />
<rect x="10" y="873" width="1518" height="2" fill="#000" />
<rect x="1527" y="101" width="2" height="853" fill="#000" />
<rect x="10" y="101" width="1" height="876" fill="#909090" />
<rect x="10" y="101" width="1594" height="1" fill="#909090" />
<line x1="1529" y1="191.500" x2="1534" y2="191.500" stroke="#000" stroke-width="1" />
<text x="1536.500" y="195.500" fill="#000" font-size="14" text-anchor="start" font-weight="normal" letter-spacing="-0.700">11000.00</text>
<line x1="1529" y1="285.500" x2="1534" y2="285.500" stroke="#000" stroke-width="1" />
<text x="1536.500" y="289.500" fill="#000" font-size="14" text-anchor="start" font-weight="normal" letter-spacing="-0.700">10000.00</text>
<line x1="1529" y1="378.500" x2="1534" y2="378.500" stroke="#000" stroke-width="1" />
<text x="1536.500" y="382.500" fill="#000" font-size="14" text-anchor="start" font-weight="normal" letter-spacing="-0.700">9000.00</text>
<line x1="1529" y1="471.500" x2="1534" y2="471.500" stroke="#000" stroke-width="1" />
<text x="1536.500" y="475.500" fill="#000" font-size="14" text-anchor="start" font-weight="normal" letter-spacing="-0.700">8000.00</text>
<line x1="1529" y1="145.500" x2="1532" y2="145.500" stroke="#000" stroke-width="1" />
<line x1="1529" y1="238.500" x2="1532" y2="238.500" stroke="#000" stroke-width="1" />
<line x1="1529" y1="331.500" x2="1532" y2="331.500" stroke="#000" stroke-width="1" />
<line x1="1529" y1="424.500" x2="1532" y2="424.500" stroke="#000" stroke-width="1" />
<line x1="1529" y1="511.500" x2="1534" y2="511.500" stroke="#000" stroke-width="1" />
<text x="1536.500" y="515.500" fill="#000" font-size="14" text-anchor="start" font-weight="normal" letter-spacing="-0.700">200.00</text>
<line x1="1529" y1="536.500" x2="1534" y2="536.500" stroke="#000" stroke-width="1" />
<text x="1536.500" y="540.500" fill="#000" font-size="14" text-anchor="start" font-weight="normal" letter-spacing="-0.700">0.00</text>
<line x1="1529" y1="561.500" x2="1534" y2="561.500" stroke="#000" stroke-width="1" />
<text x="1536.500" y="565.500" fill="#000" font-size="14" text-anchor="start" font-weight="normal" letter-spacing="-0.700">−200.00</text>
<line x1="1529" y1="499" x2="1532" y2="499" stroke="#000" stroke-width="1" />
<line x1="1529" y1="524" x2="1532" y2="524" stroke="#000" stroke-width="1" />
<line x1="1529" y1="549" x2="1532" y2="549" stroke="#000" stroke-width="1" />
<line x1="1529" y1="574" x2="1532" y2="574" stroke="#000" stroke-width="1" />
<line x1="1529" y1="486.500" x2="1534" y2="486.500" stroke="#000" stroke-width="1" />
<line x1="1529" y1="587.500" x2="1534" y2="587.500" stroke="#000" stroke-width="1" />
<line x1="1529" y1="773.500" x2="1534" y2="773.500" stroke="#000" stroke-width="1" />
<line x1="1529" y1="605.500" x2="1534" y2="605.500" stroke="#000" stroke-width="1" />
<text x="1536.500" y="609.500" fill="#000" font-size="14" text-anchor="start" font-weight="normal" letter-spacing="-0.700">100.00</text>
<line x1="1529" y1="652.500" x2="1534" y2="652.500" stroke="#000" stroke-width="1" />
<text x="1536.500" y="656.500" fill="#000" font-size="14" text-anchor="start" font-weight="normal" letter-spacing="-0.700">50.00</text>
<line x1="1529" y1="629" x2="1532" y2="629" stroke="#000" stroke-width="1" />
<line x1="1529" y1="676" x2="1532" y2="676" stroke="#000" stroke-width="1" />
<line x1="1529" y1="726.500" x2="1534" y2="726.500" stroke="#000" stroke-width="1" />
<text x="1536.500" y="730.500" fill="#000" font-size="14" text-anchor="start" font-weight="normal" letter-spacing="-0.700">100.00</text>
<line x1="1529" y1="705.500" x2="1532" y2="705.500" stroke="#000" stroke-width="1" />
<line x1="1529" y1="747.500" x2="1532" y2="747.500" stroke="#000" stroke-width="1" />
<line x1="1529" y1="768.500" x2="1532" y2="768.500" stroke="#000" stroke-width="1" />
<line x1="1529" y1="798.500" x2="1534" y2="798.500" stroke="#000" stroke-width="1" />
<text x="1536.500" y="802.500" fill="#000" font-size="14" text-anchor="start" font-weight="normal" letter-spacing="-0.700">80.00</text>
<line x1="1529" y1="823.500" x2="1534" y2="823.500" stroke="#000" stroke-width="1" />
<text x="1536.500" y="827.500" fill="#000" font-size="14" text-anchor="start" font-weight="normal" letter-spacing="-0.700">60.00</text>
<line x1="1529" y1="848.500" x2="1534" y2="848.500" stroke="#000" stroke-width="1" />
<text x="1536.500" y="852.500" fill="#000" font-size="14" text-anchor="start" font-weight="normal" letter-spacing="-0.700">40.00</text>
<line x1="1529" y1="786" x2="1532" y2="786" stroke="#000" stroke-width="1" />
<line x1="1529" y1="811" x2="1532" y2="811" stroke="#000" stroke-width="1" />
<line x1="1529" y1="836" x2="1532" y2="836" stroke="#000" stroke-width="1" />
<line x1="1529" y1="861" x2="1532" y2="861" stroke="#000" stroke-width="1" />
<line x1="1529" y1="904.500" x2="1534" y2="904.500" stroke="#000" stroke-width="1" />
<text x="1536.500" y="908.500" fill="#000" font-size="14" text-anchor="start" font-weight="normal" letter-spacing="-0.700">50000.00</text>
<rect x="1530.500" y="939.500" width="29" height="14" fill="#fff" stroke="#000" stroke-width="1"/>
<text x="1531.500" y="951.500" fill="#000" font-size="14" text-anchor="start" font-weight="normal" letter-spacing="-0.900">x100</text>
<rect x="1537" y="295" width="45" height="12" fill="#000080" />
<text x="1537.500" y="305.500" fill="#fff" font-size="14" text-anchor="start" font-weight="normal" letter-spacing="-1">9688.45</text>
<path d="M1538 313h8l-4 5z" fill="#000080"/>
<text x="1551" y="320.500" fill="#000080" font-size="14" text-anchor="start" font-weight="normal" letter-spacing="-0.700">79.16</text>
<text x="1539" y="334.500" fill="#000080" font-size="14" text-anchor="start" font-weight="normal" letter-spacing="-0.700">0.81%</text>
<text x="1397.250" y="130.500" fill="#ff0000" font-size="14" textLength="12.250" lengthAdjust="spacing">H:</text>
<text x="1413.500" y="130.500" fill="#ff0000" font-size="14" textLength="46" lengthAdjust="spacing">−11.05%</text>
<text x="1468.500" y="130.500" fill="#000080" font-size="14" textLength="11" lengthAdjust="spacing">L:</text>
<text x="1483.500" y="130.500" fill="#000080" font-size="14" textLength="38.500" lengthAdjust="spacing">19.08%</text>
<text x="126.300" y="207" fill="#ff0000" font-size="14" textLength="56.200" lengthAdjust="spacing">10,891.60</text>
<text x="186.500" y="207" fill="#ff0000" font-size="14" textLength="78" lengthAdjust="spacing">(2011/02/17)</text>
<path d="M107 199.500H122M107.500 199.500L111.500 196L115.500 199.500" stroke="#ff0000" fill="none" stroke-width="1"/>
<text x="1076.500" y="469" fill="#000080" font-size="14" textLength="47.600" lengthAdjust="spacing">8,135.79</text>
<text x="1128.500" y="469" fill="#000080" font-size="14" textLength="79" lengthAdjust="spacing">(2011/11/25)</text>
<path d="M1057 461.500H1072M1058 461.500L1062.500 465.500L1069 461.500" stroke="#000080" fill="none" stroke-width="1"/>
<text x="10.750" y="114.500" fill="#000" font-size="14" textLength="92.250" lengthAdjust="spacing">日経平均(指数)</text>
<text x="107" y="114.500" fill="#000" font-size="14" textLength="89.750" lengthAdjust="spacing">Bollinger_Bands</text>
<text x="199.500" y="114.500" fill="#000" font-size="14" textLength="34.750" lengthAdjust="spacing">(20,2)</text>
<text x="235.750" y="114.500" fill="#000" font-size="14" textLength="71" lengthAdjust="spacing">2012/04/06</text>
<text x="310.500" y="114.500" fill="#0a963c" font-size="14" textLength="56.500" lengthAdjust="spacing">10,024.00</text>
<text x="369.500" y="114.500" fill="#e8590c" font-size="14" textLength="56" lengthAdjust="spacing">10,310.80</text>
<text x="428.500" y="114.500" fill="#1565c8" font-size="14" textLength="49.500" lengthAdjust="spacing">9,737.20</text>
<text x="10.750" y="495.500" fill="#000" font-size="14" textLength="106" lengthAdjust="spacing">MACD_EMA_Signal</text>
<text x="119.500" y="495.500" fill="#000" font-size="14" textLength="51" lengthAdjust="spacing">(12,26,9)</text>
<text x="172.500" y="495.500" fill="#000" font-size="14" textLength="71" lengthAdjust="spacing">2012/04/06</text>
<text x="248.250" y="495.500" fill="#0a963c" font-size="14" textLength="30.250" lengthAdjust="spacing">71.36</text>
<text x="282" y="495.500" fill="#e8590c" font-size="14" textLength="39.750" lengthAdjust="spacing">150.50</text>
<text x="324.500" y="495.500" fill="#0000ff" font-size="14" textLength="38" lengthAdjust="spacing">−79.14</text>
<text x="366.500" y="495.500" fill="#ff00cc" font-size="14" textLength="25.250" lengthAdjust="spacing">0.00</text>
<text x="10.750" y="603.500" fill="#000" font-size="14" textLength="21" lengthAdjust="spacing">RSI</text>
<text x="33.250" y="603.500" fill="#000" font-size="14" textLength="25.250" lengthAdjust="spacing">(14)</text>
<text x="60" y="603.500" fill="#000" font-size="14" textLength="70.500" lengthAdjust="spacing">2012/04/06</text>
<text x="134.500" y="603.500" fill="#0a963c" font-size="14" textLength="31" lengthAdjust="spacing">29.69</text>
<text x="169" y="603.500" fill="#e8590c" font-size="14" textLength="32.250" lengthAdjust="spacing">30.00</text>
<text x="204.500" y="603.500" fill="#1565c8" font-size="14" textLength="32.250" lengthAdjust="spacing">70.00</text>
<text x="10.750" y="705.500" fill="#000" font-size="14" textLength="41" lengthAdjust="spacing">乖離度</text>
<text x="55" y="705.500" fill="#000" font-size="14" textLength="25.500" lengthAdjust="spacing">(20)</text>
<text x="82" y="705.500" fill="#000" font-size="14" textLength="71" lengthAdjust="spacing">2012/04/06</text>
<text x="155.750" y="705.500" fill="#0a963c" font-size="14" textLength="31.750" lengthAdjust="spacing">96.65</text>
<text x="190.750" y="705.500" fill="#e8590c" font-size="14" textLength="39.750" lengthAdjust="spacing">100.00</text>
<text x="10.750" y="784.500" fill="#000" font-size="14" textLength="122.250" lengthAdjust="spacing">サイコロジカルライン</text>
<text x="136.500" y="784.500" fill="#000" font-size="14" textLength="24.750" lengthAdjust="spacing">(12)</text>
<text x="163.250" y="784.500" fill="#000" font-size="14" textLength="70.250" lengthAdjust="spacing">2012/04/06</text>
<text x="237" y="784.500" fill="#0a963c" font-size="14" textLength="31.500" lengthAdjust="spacing">33.33</text>
<text x="272" y="784.500" fill="#e8590c" font-size="14" textLength="32.250" lengthAdjust="spacing">25.00</text>
<text x="308.250" y="784.500" fill="#1565c8" font-size="14" textLength="31.750" lengthAdjust="spacing">75.00</text>
<text x="10.750" y="887.500" fill="#000" font-size="14" textLength="42.250" lengthAdjust="spacing">出来高</text>
<text x="55.750" y="887.500" fill="#000" font-size="14" textLength="71" lengthAdjust="spacing">2012/04/06</text>
<text x="130" y="887.500" fill="#0a963c" font-size="14" textLength="74.250" lengthAdjust="spacing">1,645,980.00</text>
<g stroke="#555" fill="#fff" stroke-width="1"><rect x="1504.500" y="484.500" width="8" height="8"/><rect x="1514.500" y="484.500" width="8" height="8"/><path d="M1506 488.500h5M1516 486l5 5M1521 486l-5 5" stroke="#000"/></g>
<g stroke="#555" fill="#fff" stroke-width="1"><rect x="1504.500" y="592.500" width="8" height="8"/><rect x="1514.500" y="592.500" width="8" height="8"/><path d="M1506 596.500h5M1516 594l5 5M1521 594l-5 5" stroke="#000"/></g>
<g stroke="#555" fill="#fff" stroke-width="1"><rect x="1504.500" y="694.500" width="8" height="8"/><rect x="1514.500" y="694.500" width="8" height="8"/><path d="M1506 698.500h5M1516 696l5 5M1521 696l-5 5" stroke="#000"/></g>
<g stroke="#555" fill="#fff" stroke-width="1"><rect x="1504.500" y="772.500" width="8" height="8"/><rect x="1514.500" y="772.500" width="8" height="8"/><path d="M1506 776.500h5M1516 774l5 5M1521 774l-5 5" stroke="#000"/></g>
<g stroke="#555" fill="#fff" stroke-width="1"><rect x="1504.500" y="876.500" width="8" height="8"/><rect x="1514.500" y="876.500" width="8" height="8"/><path d="M1506 880.500h5M1516 878l5 5M1521 878l-5 5" stroke="#000"/></g>
<line x1="12.500" y1="954" x2="12.500" y2="957" stroke="#000" stroke-width="1" />
<line x1="22.500" y1="954" x2="22.500" y2="957" stroke="#000" stroke-width="1" />
<line x1="47.500" y1="954" x2="47.500" y2="957" stroke="#000" stroke-width="1" />
<line x1="72.500" y1="954" x2="72.500" y2="957" stroke="#000" stroke-width="1" />
<line x1="92.500" y1="954" x2="92.500" y2="957" stroke="#000" stroke-width="1" />
<line x1="117.500" y1="954" x2="117.500" y2="957" stroke="#000" stroke-width="1" />
<line x1="142.500" y1="954" x2="142.500" y2="957" stroke="#000" stroke-width="1" />
<line x1="167.500" y1="954" x2="167.500" y2="957" stroke="#000" stroke-width="1" />
<line x1="192.500" y1="954" x2="192.500" y2="957" stroke="#000" stroke-width="1" />
<line x1="217.500" y1="954" x2="217.500" y2="957" stroke="#000" stroke-width="1" />
<line x1="237.500" y1="954" x2="237.500" y2="957" stroke="#000" stroke-width="1" />
<line x1="262.500" y1="954" x2="262.500" y2="957" stroke="#000" stroke-width="1" />
<line x1="287.500" y1="954" x2="287.500" y2="957" stroke="#000" stroke-width="1" />
<line x1="312.500" y1="954" x2="312.500" y2="957" stroke="#000" stroke-width="1" />
<line x1="337.500" y1="954" x2="337.500" y2="957" stroke="#000" stroke-width="1" />
<line x1="357.500" y1="954" x2="357.500" y2="957" stroke="#000" stroke-width="1" />
<line x1="367.500" y1="954" x2="367.500" y2="957" stroke="#000" stroke-width="1" />
<line x1="392.500" y1="954" x2="392.500" y2="957" stroke="#000" stroke-width="1" />
<line x1="417.500" y1="954" x2="417.500" y2="957" stroke="#000" stroke-width="1" />
<line x1="442.500" y1="954" x2="442.500" y2="957" stroke="#000" stroke-width="1" />
<line x1="467.500" y1="954" x2="467.500" y2="957" stroke="#000" stroke-width="1" />
<line x1="492.500" y1="954" x2="492.500" y2="957" stroke="#000" stroke-width="1" />
<line x1="517.500" y1="954" x2="517.500" y2="957" stroke="#000" stroke-width="1" />
<line x1="542.500" y1="954" x2="542.500" y2="957" stroke="#000" stroke-width="1" />
<line x1="567.500" y1="954" x2="567.500" y2="957" stroke="#000" stroke-width="1" />
<line x1="592.500" y1="954" x2="592.500" y2="957" stroke="#000" stroke-width="1" />
<line x1="617.500" y1="954" x2="617.500" y2="957" stroke="#000" stroke-width="1" />
<line x1="637.500" y1="954" x2="637.500" y2="957" stroke="#000" stroke-width="1" />
<line x1="662.500" y1="954" x2="662.500" y2="957" stroke="#000" stroke-width="1" />
<line x1="687.500" y1="954" x2="687.500" y2="957" stroke="#000" stroke-width="1" />
<line x1="712.500" y1="954" x2="712.500" y2="957" stroke="#000" stroke-width="1" />
<line x1="737.500" y1="954" x2="737.500" y2="957" stroke="#000" stroke-width="1" />
<line x1="762.500" y1="954" x2="762.500" y2="957" stroke="#000" stroke-width="1" />
<line x1="787.500" y1="954" x2="787.500" y2="957" stroke="#000" stroke-width="1" />
<line x1="812.500" y1="954" x2="812.500" y2="957" stroke="#000" stroke-width="1" />
<line x1="837.500" y1="954" x2="837.500" y2="957" stroke="#000" stroke-width="1" />
<line x1="852.500" y1="954" x2="852.500" y2="957" stroke="#000" stroke-width="1" />
<line x1="877.500" y1="954" x2="877.500" y2="957" stroke="#000" stroke-width="1" />
<line x1="902.500" y1="954" x2="902.500" y2="957" stroke="#000" stroke-width="1" />
<line x1="922.500" y1="954" x2="922.500" y2="957" stroke="#000" stroke-width="1" />
<line x1="947.500" y1="954" x2="947.500" y2="957" stroke="#000" stroke-width="1" />
<line x1="972.500" y1="954" x2="972.500" y2="957" stroke="#000" stroke-width="1" />
<line x1="992.500" y1="954" x2="992.500" y2="957" stroke="#000" stroke-width="1" />
<line x1="1017.500" y1="954" x2="1017.500" y2="957" stroke="#000" stroke-width="1" />
<line x1="1042.500" y1="954" x2="1042.500" y2="957" stroke="#000" stroke-width="1" />
<line x1="1062.500" y1="954" x2="1062.500" y2="957" stroke="#000" stroke-width="1" />
<line x1="1087.500" y1="954" x2="1087.500" y2="957" stroke="#000" stroke-width="1" />
<line x1="1112.500" y1="954" x2="1112.500" y2="957" stroke="#000" stroke-width="1" />
<line x1="1137.500" y1="954" x2="1137.500" y2="957" stroke="#000" stroke-width="1" />
<line x1="1157.500" y1="954" x2="1157.500" y2="957" stroke="#000" stroke-width="1" />
<line x1="1182.500" y1="954" x2="1182.500" y2="957" stroke="#000" stroke-width="1" />
<line x1="1197.500" y1="954" x2="1197.500" y2="957" stroke="#000" stroke-width="1" />
<line x1="1217.500" y1="954" x2="1217.500" y2="957" stroke="#000" stroke-width="1" />
<line x1="1242.500" y1="954" x2="1242.500" y2="957" stroke="#000" stroke-width="1" />
<line x1="1267.500" y1="954" x2="1267.500" y2="957" stroke="#000" stroke-width="1" />
<line x1="1292.500" y1="954" x2="1292.500" y2="957" stroke="#000" stroke-width="1" />
<line x1="1317.500" y1="954" x2="1317.500" y2="957" stroke="#000" stroke-width="1" />
<line x1="1342.500" y1="954" x2="1342.500" y2="957" stroke="#000" stroke-width="1" />
<line x1="1367.500" y1="954" x2="1367.500" y2="957" stroke="#000" stroke-width="1" />
<line x1="1392.500" y1="954" x2="1392.500" y2="957" stroke="#000" stroke-width="1" />
<line x1="1417.500" y1="954" x2="1417.500" y2="957" stroke="#000" stroke-width="1" />
<line x1="1442.500" y1="954" x2="1442.500" y2="957" stroke="#000" stroke-width="1" />
<line x1="1462.500" y1="954" x2="1462.500" y2="957" stroke="#000" stroke-width="1" />
<line x1="1487.500" y1="954" x2="1487.500" y2="957" stroke="#000" stroke-width="1" />
<line x1="52.500" y1="954" x2="52.500" y2="959" stroke="#000" stroke-width="1" />
<line x1="147.500" y1="954" x2="147.500" y2="959" stroke="#000" stroke-width="1" />
<line x1="257.500" y1="954" x2="257.500" y2="959" stroke="#000" stroke-width="1" />
<line x1="357.500" y1="954" x2="357.500" y2="959" stroke="#000" stroke-width="1" />
<line x1="452.500" y1="954" x2="452.500" y2="959" stroke="#000" stroke-width="1" />
<line x1="562.500" y1="954" x2="562.500" y2="959" stroke="#000" stroke-width="1" />
<line x1="662.500" y1="954" x2="662.500" y2="959" stroke="#000" stroke-width="1" />
<line x1="777.500" y1="954" x2="777.500" y2="959" stroke="#000" stroke-width="1" />
<line x1="877.500" y1="954" x2="877.500" y2="959" stroke="#000" stroke-width="1" />
<line x1="977.500" y1="954" x2="977.500" y2="959" stroke="#000" stroke-width="1" />
<line x1="1077.500" y1="954" x2="1077.500" y2="959" stroke="#000" stroke-width="1" />
<line x1="1182.500" y1="954" x2="1182.500" y2="959" stroke="#000" stroke-width="1" />
<line x1="1277.500" y1="954" x2="1277.500" y2="959" stroke="#000" stroke-width="1" />
<line x1="1382.500" y1="954" x2="1382.500" y2="959" stroke="#000" stroke-width="1" />
<line x1="1487.500" y1="954" x2="1487.500" y2="959" stroke="#000" stroke-width="1" />
<text x="11" y="972" fill="#000" font-size="14" text-anchor="start" font-weight="bold" letter-spacing="-2">11</text>
<text x="52.800" y="972" fill="#000" font-size="14" text-anchor="middle" font-weight="bold" letter-spacing="-0.700">F</text>
<text x="147.800" y="972" fill="#000" font-size="14" text-anchor="middle" font-weight="bold" letter-spacing="-0.700">M</text>
<text x="257.800" y="972" fill="#000" font-size="14" text-anchor="middle" font-weight="bold" letter-spacing="-0.700">A</text>
<text x="357.800" y="972" fill="#000" font-size="14" text-anchor="middle" font-weight="bold" letter-spacing="-0.700">M</text>
<text x="452.800" y="972" fill="#000" font-size="14" text-anchor="middle" font-weight="bold" letter-spacing="-0.700">J</text>
<text x="562.800" y="972" fill="#000" font-size="14" text-anchor="middle" font-weight="bold" letter-spacing="-0.700">J</text>
<text x="662.800" y="972" fill="#000" font-size="14" text-anchor="middle" font-weight="bold" letter-spacing="-0.700">A</text>
<text x="777.800" y="972" fill="#000" font-size="14" text-anchor="middle" font-weight="bold" letter-spacing="-0.700">S</text>
<text x="877.800" y="972" fill="#000" font-size="14" text-anchor="middle" font-weight="bold" letter-spacing="-0.700">O</text>
<text x="977.800" y="972" fill="#000" font-size="14" text-anchor="middle" font-weight="bold" letter-spacing="-0.700">N</text>
<text x="1077.800" y="972" fill="#000" font-size="14" text-anchor="middle" font-weight="bold" letter-spacing="-0.700">D</text>
<text x="1182.800" y="972" fill="#000" font-size="14" text-anchor="middle" font-weight="bold" letter-spacing="-0.700">12</text>
<text x="1277.800" y="972" fill="#000" font-size="14" text-anchor="middle" font-weight="bold" letter-spacing="-0.700">F</text>
<text x="1382.800" y="972" fill="#000" font-size="14" text-anchor="middle" font-weight="bold" letter-spacing="-0.700">M</text>
<text x="71.800" y="972" fill="#000" font-size="14" text-anchor="middle" font-weight="normal" letter-spacing="-0.700">07</text>
<text x="91.800" y="972" fill="#000" font-size="14" text-anchor="middle" font-weight="normal" letter-spacing="-0.700">14</text>
<text x="116.800" y="972" fill="#000" font-size="14" text-anchor="middle" font-weight="normal" letter-spacing="-0.700">21</text>
<text x="166.800" y="972" fill="#000" font-size="14" text-anchor="middle" font-weight="normal" letter-spacing="-0.700">07</text>
<text x="191.800" y="972" fill="#000" font-size="14" text-anchor="middle" font-weight="normal" letter-spacing="-0.700">14</text>
<text x="216.800" y="972" fill="#000" font-size="14" text-anchor="middle" font-weight="normal" letter-spacing="-0.700">22</text>
<text x="236.800" y="972" fill="#000" font-size="14" text-anchor="middle" font-weight="normal" letter-spacing="-0.700">28</text>
<text x="286.800" y="972" fill="#000" font-size="14" text-anchor="middle" font-weight="normal" letter-spacing="-0.700">11</text>
<text x="311.800" y="972" fill="#000" font-size="14" text-anchor="middle" font-weight="normal" letter-spacing="-0.700">18</text>
<text x="336.800" y="972" fill="#000" font-size="14" text-anchor="middle" font-weight="normal" letter-spacing="-0.700">25</text>
<text x="391.800" y="972" fill="#000" font-size="14" text-anchor="middle" font-weight="normal" letter-spacing="-0.700">16</text>
<text x="416.800" y="972" fill="#000" font-size="14" text-anchor="middle" font-weight="normal" letter-spacing="-0.700">23</text>
<text x="466.800" y="972" fill="#000" font-size="14" text-anchor="middle" font-weight="normal" letter-spacing="-0.700">06</text>
<text x="491.800" y="972" fill="#000" font-size="14" text-anchor="middle" font-weight="normal" letter-spacing="-0.700">13</text>
<text x="516.800" y="972" fill="#000" font-size="14" text-anchor="middle" font-weight="normal" letter-spacing="-0.700">20</text>
<text x="541.800" y="972" fill="#000" font-size="14" text-anchor="middle" font-weight="normal" letter-spacing="-0.700">27</text>
<text x="591.800" y="972" fill="#000" font-size="14" text-anchor="middle" font-weight="normal" letter-spacing="-0.700">11</text>
<text x="616.800" y="972" fill="#000" font-size="14" text-anchor="middle" font-weight="normal" letter-spacing="-0.700">19</text>
<text x="636.800" y="972" fill="#000" font-size="14" text-anchor="middle" font-weight="normal" letter-spacing="-0.700">25</text>
<text x="686.800" y="972" fill="#000" font-size="14" text-anchor="middle" font-weight="normal" letter-spacing="-0.700">08</text>
<text x="711.800" y="972" fill="#000" font-size="14" text-anchor="middle" font-weight="normal" letter-spacing="-0.700">15</text>
<text x="736.800" y="972" fill="#000" font-size="14" text-anchor="middle" font-weight="normal" letter-spacing="-0.700">22</text>
<text x="761.800" y="972" fill="#000" font-size="14" text-anchor="middle" font-weight="normal" letter-spacing="-0.700">29</text>
<text x="811.800" y="972" fill="#000" font-size="14" text-anchor="middle" font-weight="normal" letter-spacing="-0.700">12</text>
<text x="836.800" y="972" fill="#000" font-size="14" text-anchor="middle" font-weight="normal" letter-spacing="-0.700">20</text>
<text x="851.800" y="972" fill="#000" font-size="14" text-anchor="middle" font-weight="normal" letter-spacing="-0.700">26</text>
<text x="901.800" y="972" fill="#000" font-size="14" text-anchor="middle" font-weight="normal" letter-spacing="-0.700">11</text>
<text x="921.800" y="972" fill="#000" font-size="14" text-anchor="middle" font-weight="normal" letter-spacing="-0.700">17</text>
<text x="946.800" y="972" fill="#000" font-size="14" text-anchor="middle" font-weight="normal" letter-spacing="-0.700">24</text>
<text x="991.800" y="972" fill="#000" font-size="14" text-anchor="middle" font-weight="normal" letter-spacing="-0.700">07</text>
<text x="1016.800" y="972" fill="#000" font-size="14" text-anchor="middle" font-weight="normal" letter-spacing="-0.700">14</text>
<text x="1041.800" y="972" fill="#000" font-size="14" text-anchor="middle" font-weight="normal" letter-spacing="-0.700">21</text>
<text x="1061.800" y="972" fill="#000" font-size="14" text-anchor="middle" font-weight="normal" letter-spacing="-0.700">28</text>
<text x="1111.800" y="972" fill="#000" font-size="14" text-anchor="middle" font-weight="normal" letter-spacing="-0.700">12</text>
<text x="1136.800" y="972" fill="#000" font-size="14" text-anchor="middle" font-weight="normal" letter-spacing="-0.700">19</text>
<text x="1156.800" y="972" fill="#000" font-size="14" text-anchor="middle" font-weight="normal" letter-spacing="-0.700">26</text>
<text x="1196.800" y="972" fill="#000" font-size="14" text-anchor="middle" font-weight="normal" letter-spacing="-0.700">10</text>
<text x="1216.800" y="972" fill="#000" font-size="14" text-anchor="middle" font-weight="normal" letter-spacing="-0.700">16</text>
<text x="1241.800" y="972" fill="#000" font-size="14" text-anchor="middle" font-weight="normal" letter-spacing="-0.700">23</text>
<text x="1291.800" y="972" fill="#000" font-size="14" text-anchor="middle" font-weight="normal" letter-spacing="-0.700">06</text>
<text x="1316.800" y="972" fill="#000" font-size="14" text-anchor="middle" font-weight="normal" letter-spacing="-0.700">13</text>
<text x="1341.800" y="972" fill="#000" font-size="14" text-anchor="middle" font-weight="normal" letter-spacing="-0.700">20</text>
<text x="1366.800" y="972" fill="#000" font-size="14" text-anchor="middle" font-weight="normal" letter-spacing="-0.700">27</text>
<text x="1416.800" y="972" fill="#000" font-size="14" text-anchor="middle" font-weight="normal" letter-spacing="-0.700">12</text>
<text x="1441.800" y="972" fill="#000" font-size="14" text-anchor="middle" font-weight="normal" letter-spacing="-0.700">19</text>
<text x="1461.800" y="972" fill="#000" font-size="14" text-anchor="middle" font-weight="normal" letter-spacing="-0.700">26</text>
</svg>

<!-- scrollbar row -->
<div class="abs" style="left:11px;top:977px;width:1592px;height:13px;background:#ece9e4;background-image:repeating-conic-gradient(#d4d0c8 0 25%,#fff 0 50%);background-size:2px 2px"></div>
<div class="abs" style="left:11px;top:977px;width:36px;height:13px;background:#d4d0c8"></div>
<div class="abs" style="left:16px;top:981px;width:25px;height:2px;background:#fff;border-bottom:1px solid #808080"></div>
<div class="abs" style="left:16px;top:984px;width:25px;height:2px;background:#fff;border-bottom:1px solid #808080"></div>
<div class="abs" style="left:47px;top:977px;width:14px;height:13px;background:#d4d0c8;border:1px solid #fff;border-right:1px solid #404040;border-bottom:2px solid #404040"><svg width="12" height="10" style="display:block"><path d="M7.500 2v6L3.500 5z" fill="#000"/></svg></div>
<div class="abs" style="left:61px;top:977px;width:16px;height:13px;background:#d4d0c8;border:1px solid #fff;border-right:1px solid #404040;border-bottom:2px solid #404040"></div>
<div class="abs" style="left:1479px;top:977px;width:124px;height:13px;background:#d4d0c8"></div>
<div class="abs" style="left:1479px;top:977px;width:16px;height:13px;background:#d4d0c8;border:1px solid #fff;border-right:1px solid #404040;border-bottom:2px solid #404040"><svg width="14" height="10" style="display:block"><path d="M5.500 2v6l4-3z" fill="#000"/></svg></div>
<svg class="abs" style="left:1496px;top:977px" width="108" height="13" viewBox="0 0 108 13"><path d="M1 6.500l6-5.500v11zM14 6.500L8 1v11z" fill="#000"/><path d="M20 1l6.200 5.500L20 12zM32.500 1l-6.200 5.500 6.200 5.500z" fill="#000"/><circle cx="44" cy="6.500" r="5.300" fill="#fff" stroke="#000" stroke-width="1.300"/><path d="M40.500 6.500h7M44 3v7" stroke="#000" stroke-width="1.500"/><circle cx="62" cy="6.500" r="5.300" fill="#ececec" stroke="#b0b0b0" stroke-width="1.300"/><path d="M58.500 6.500h7" stroke="#b0b0b0" stroke-width="1.500"/><path d="M74.500 1.500h10v10h-10zM74.500 6.500h10M79.500 1.500v10" fill="none" stroke="#a8a8a8"/><path d="M92.500 1.500h10v10h-10z" fill="#fff" stroke="#000" stroke-width="1.400"/><path d="M92.500 1.500l10 10M102.500 1.500l-10 10" stroke="#000" stroke-width=".9"/></svg>
<div class="abs" style="left:6px;top:990px;width:1600px;height:4px;background:#f4f4f4"></div>
<div class="abs" style="left:5px;top:994px;width:1603px;height:1px;background:#1c1c1c"></div>
<div class="abs" style="left:3px;top:995px;width:1606px;height:1px;background:#7a7a7a"></div>
<div class="abs" style="left:0;top:996px;width:1612px;height:3px;background:#dcdcdc"></div>
<div class="abs" style="left:0;top:999px;width:1612px;height:1px;background:#6a6a6a"></div>
</div>
</body>
</html>
